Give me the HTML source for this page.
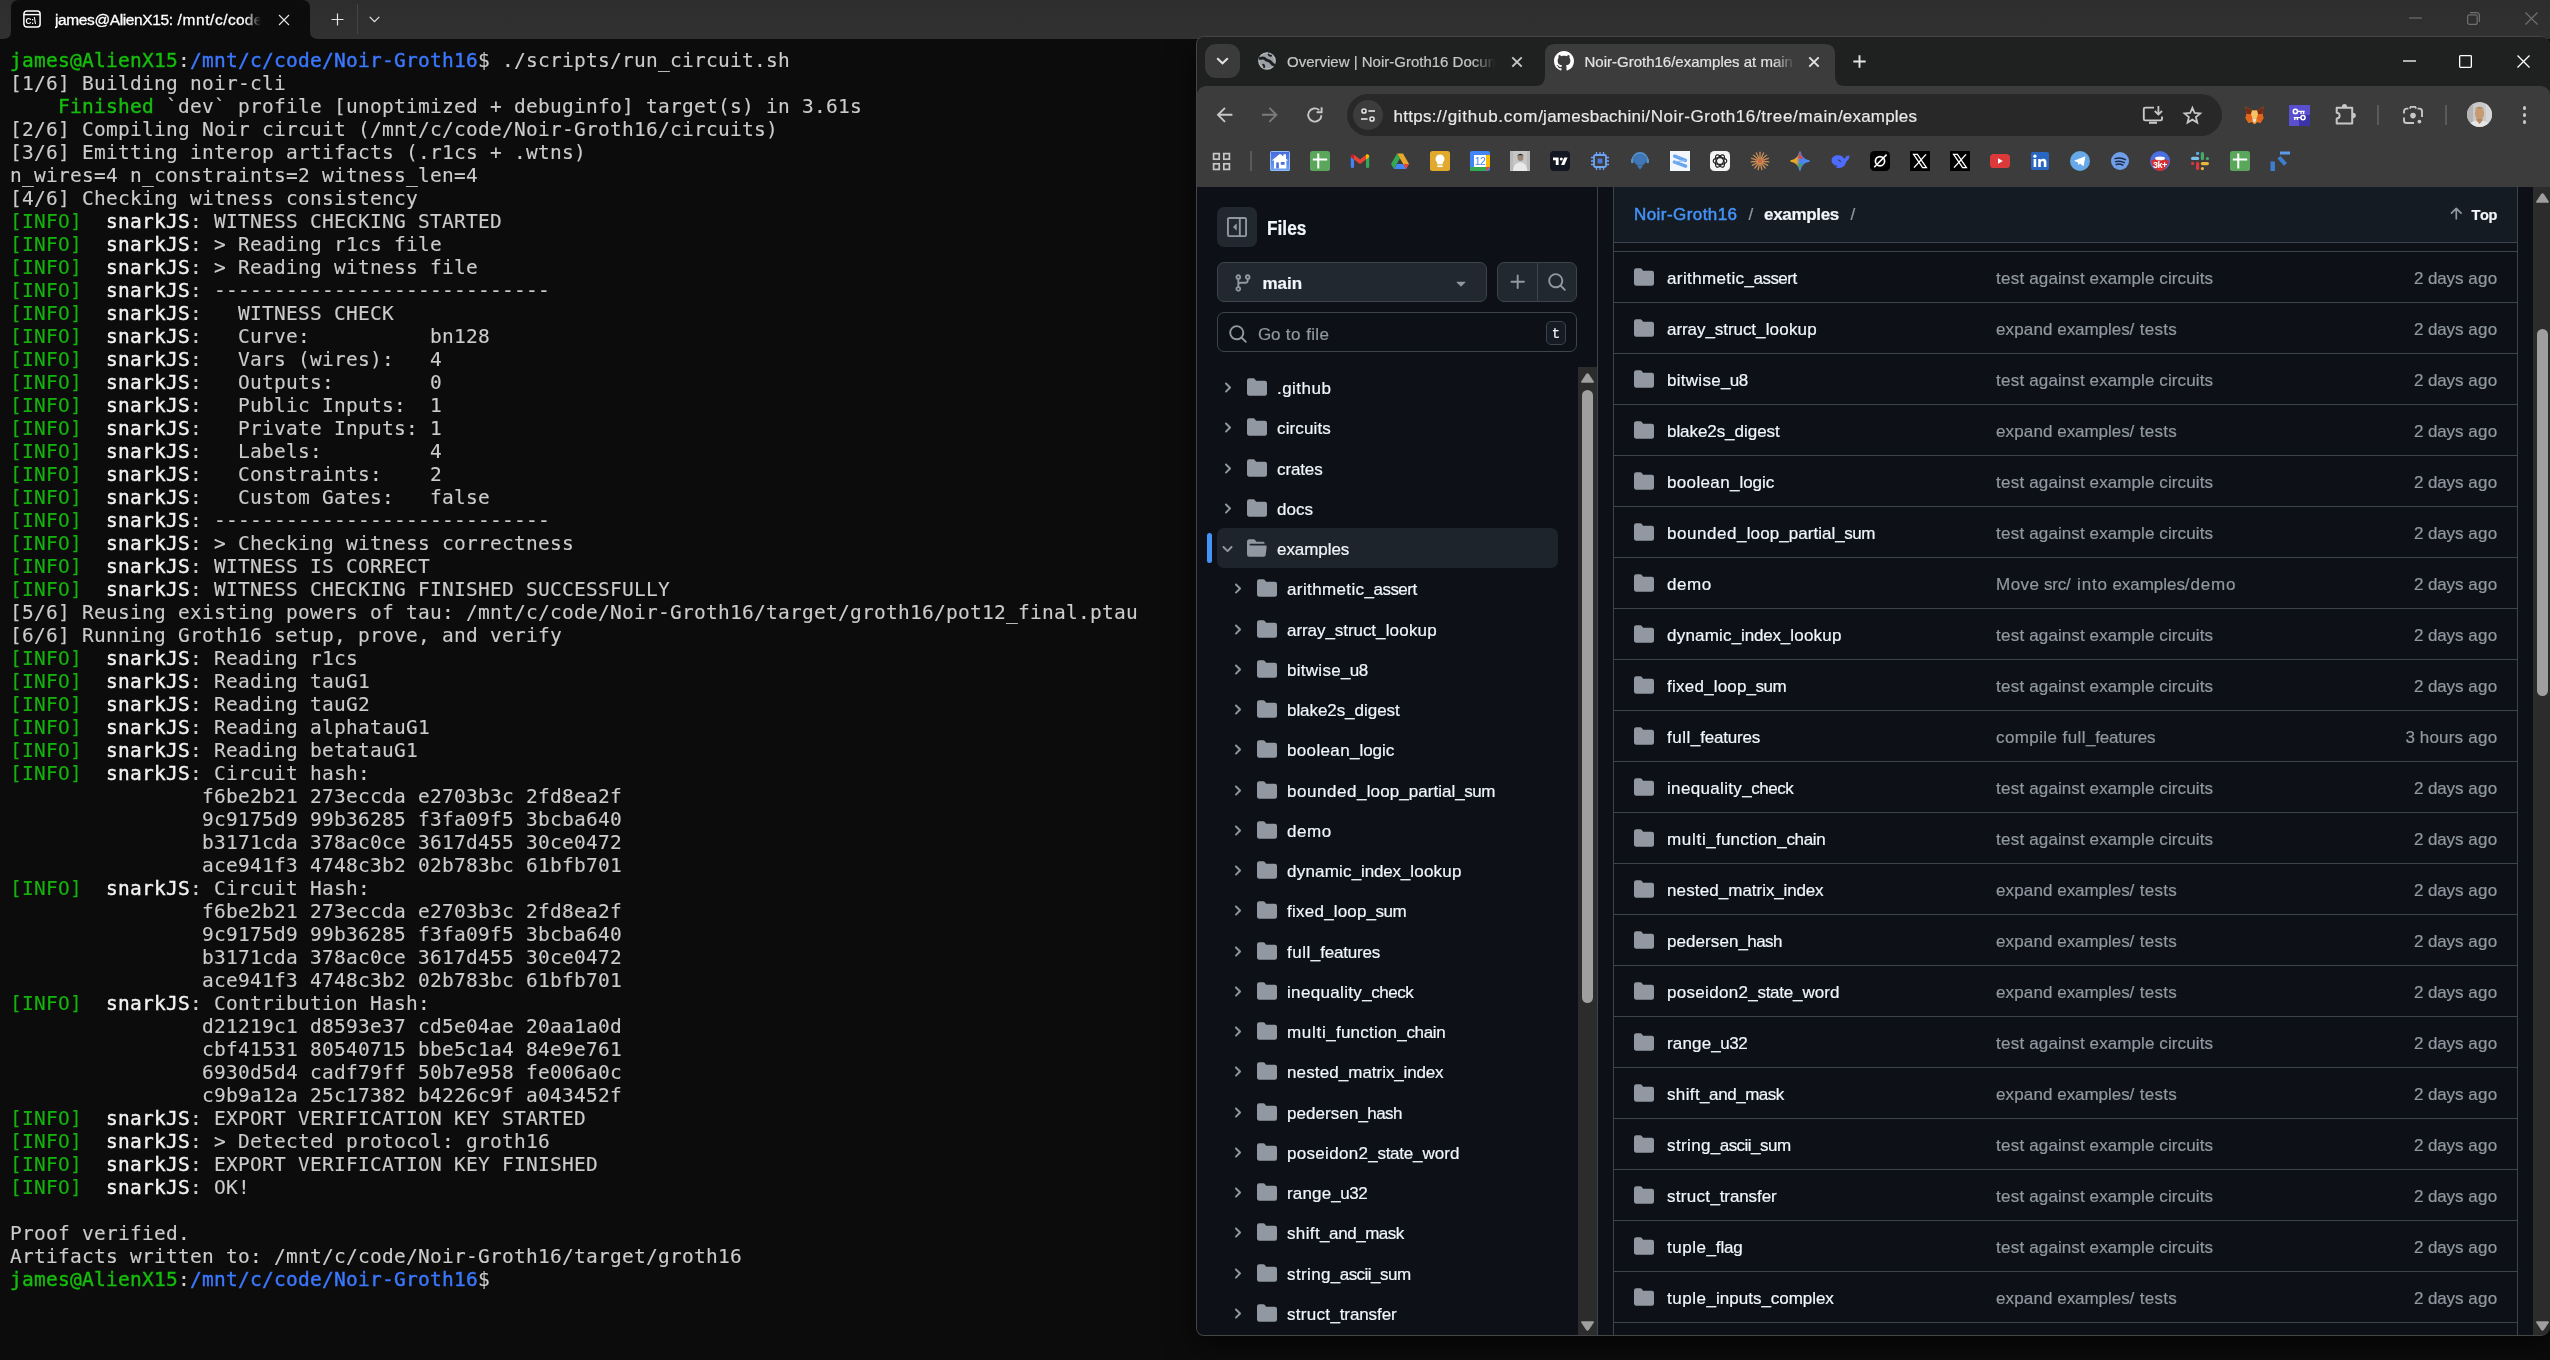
<!DOCTYPE html>
<html lang="en"><head><meta charset="utf-8"><title>Noir-Groth16/examples at main</title>
<style>
html,body{margin:0;padding:0;}
body{width:2550px;height:1360px;overflow:hidden;background:#0c0c0c;position:relative;
font-family:"Liberation Sans",sans-serif;font-kerning:none;font-variant-ligatures:none;}
svg{display:block;overflow:visible;}
#term,#in{will-change:transform;}
#gh div{-webkit-text-stroke:0.2px currentColor;}
#win{position:absolute;left:1196px;top:36px;width:1354px;height:1300px;box-sizing:border-box;border:1px solid #454545;border-right:none;
border-radius:8px 9px 9px 8px;overflow:hidden;background:#1f2020;}
#sh{position:absolute;left:1198px;top:40px;width:1352px;height:1294px;border-radius:8px;box-shadow:0 10px 30px 2px rgba(0,0,0,0.65);}
#in{position:absolute;left:-1197px;top:-37px;width:2550px;height:1360px;}
</style></head><body>
<div id="sh"></div>
<div id="term">
<div style="position:absolute;left:0px;top:0px;width:2550px;height:39px;background:linear-gradient(#2d2d2d,#313131);"></div>
<svg style="position:absolute;left:0px;top:0px;" width="330" height="39" viewBox="0 0 330 39"><path d="M3 39 Q11 39 11 31 V8 Q11 0 19 0 H302 Q310 0 310 8 V31 Q310 39 318 39 Z" fill="#0c0c0c"/></svg>
<svg style="position:absolute;left:23px;top:10px;" width="18" height="18" viewBox="0 0 18 18"><rect x="0.9" y="0.9" width="16.2" height="16.2" rx="3" fill="none" stroke="#fff" stroke-width="1.5"/><path d="M1 4.6H17" stroke="#fff" stroke-width="1.4"/><text x="2.6" y="14.2" font-family="Liberation Sans, sans-serif" font-size="8.2" font-weight="700" fill="#fff" letter-spacing="-0.3">C:\</text></svg>
<div style="position:absolute;white-space:nowrap;top:8px;height:24px;line-height:24px;font-size:15.5px;color:#fff;left:55px;width:206px;overflow:hidden;-webkit-text-stroke:0.3px #fff;-webkit-mask-image:linear-gradient(90deg,#000 190px,transparent 206px);mask-image:linear-gradient(90deg,#000 190px,transparent 206px);"><span style="letter-spacing:-0.39px">james@AlienX15:</span><span style="letter-spacing:0.61px"> /mnt</span><span style="letter-spacing:0.55px">/c</span><span style="letter-spacing:0.29px">/code</span><span style="letter-spacing:0.28px">/Noir-Groth16</span></div>
<svg style="position:absolute;left:278px;top:14px;" width="12" height="12" viewBox="0 0 12 12"><path d="M1 1L11 11M11 1L1 11" stroke="#e6e6e6" stroke-width="1.1" fill="none"/></svg>
<svg style="position:absolute;left:331px;top:13px;" width="13" height="13" viewBox="0 0 13 13"><path d="M6.5 0.5V12.5M0.5 6.5H12.5" stroke="#e6e6e6" stroke-width="1.2" fill="none"/></svg>
<div style="position:absolute;left:357px;top:4px;width:1px;height:30px;background:#454545;"></div>
<svg style="position:absolute;left:369px;top:16px;" width="11" height="7" viewBox="0 0 11 7"><path d="M0.7 0.8L5.5 5.6L10.3 0.8" stroke="#e6e6e6" stroke-width="1.2" fill="none"/></svg>
<svg style="position:absolute;left:2409px;top:17px;" width="13" height="2" viewBox="0 0 13 2"><path d="M0 1H13" stroke="#6f6f6f" stroke-width="1.2"/></svg>
<svg style="position:absolute;left:2467px;top:12px;" width="13" height="13" viewBox="0 0 13 13"><rect x="0.6" y="2.8" width="9.6" height="9.6" rx="2" fill="none" stroke="#6f6f6f" stroke-width="1.2"/><path d="M3 0.6H9.4A3 3 0 0 1 12.4 3.6V10" fill="none" stroke="#6f6f6f" stroke-width="1.2"/></svg>
<svg style="position:absolute;left:2525px;top:12px;" width="13" height="13" viewBox="0 0 13 13"><path d="M0.5 0.5L12.5 12.5M12.5 0.5L0.5 12.5" stroke="#6f6f6f" stroke-width="1.2" fill="none"/></svg>
<pre style="position:absolute;left:10px;top:49px;margin:0;font-family:'DejaVu Sans Mono','Liberation Mono',monospace;font-size:19.5px;line-height:23px;letter-spacing:0.2604px;color:#cccccc;font-kerning:none;font-variant-ligatures:none;-webkit-text-stroke:0.12px currentColor;"><span style="color:#15bd0c;-webkit-text-stroke:0.4px currentColor;">james@AlienX15</span>:<span style="color:#3b78ff;-webkit-text-stroke:0.4px currentColor;">/mnt/c/code/Noir-Groth16</span>$ ./scripts/run_circuit.sh
[1/6] Building noir-cli
    <span style="color:#15bd0c;-webkit-text-stroke:0.4px currentColor;">Finished</span> `dev` profile [unoptimized + debuginfo] target(s) in 3.61s
[2/6] Compiling Noir circuit (/mnt/c/code/Noir-Groth16/circuits)
[3/6] Emitting interop artifacts (.r1cs + .wtns)
n_wires=4 n_constraints=2 witness_len=4
[4/6] Checking witness consistency
<span style="color:#14b40d;">[INFO]</span>  <span style="color:#f2f2f2;-webkit-text-stroke:0.4px currentColor;">snarkJS</span>: WITNESS CHECKING STARTED
<span style="color:#14b40d;">[INFO]</span>  <span style="color:#f2f2f2;-webkit-text-stroke:0.4px currentColor;">snarkJS</span>: &gt; Reading r1cs file
<span style="color:#14b40d;">[INFO]</span>  <span style="color:#f2f2f2;-webkit-text-stroke:0.4px currentColor;">snarkJS</span>: &gt; Reading witness file
<span style="color:#14b40d;">[INFO]</span>  <span style="color:#f2f2f2;-webkit-text-stroke:0.4px currentColor;">snarkJS</span>: ----------------------------
<span style="color:#14b40d;">[INFO]</span>  <span style="color:#f2f2f2;-webkit-text-stroke:0.4px currentColor;">snarkJS</span>:   WITNESS CHECK
<span style="color:#14b40d;">[INFO]</span>  <span style="color:#f2f2f2;-webkit-text-stroke:0.4px currentColor;">snarkJS</span>:   Curve:          bn128
<span style="color:#14b40d;">[INFO]</span>  <span style="color:#f2f2f2;-webkit-text-stroke:0.4px currentColor;">snarkJS</span>:   Vars (wires):   4
<span style="color:#14b40d;">[INFO]</span>  <span style="color:#f2f2f2;-webkit-text-stroke:0.4px currentColor;">snarkJS</span>:   Outputs:        0
<span style="color:#14b40d;">[INFO]</span>  <span style="color:#f2f2f2;-webkit-text-stroke:0.4px currentColor;">snarkJS</span>:   Public Inputs:  1
<span style="color:#14b40d;">[INFO]</span>  <span style="color:#f2f2f2;-webkit-text-stroke:0.4px currentColor;">snarkJS</span>:   Private Inputs: 1
<span style="color:#14b40d;">[INFO]</span>  <span style="color:#f2f2f2;-webkit-text-stroke:0.4px currentColor;">snarkJS</span>:   Labels:         4
<span style="color:#14b40d;">[INFO]</span>  <span style="color:#f2f2f2;-webkit-text-stroke:0.4px currentColor;">snarkJS</span>:   Constraints:    2
<span style="color:#14b40d;">[INFO]</span>  <span style="color:#f2f2f2;-webkit-text-stroke:0.4px currentColor;">snarkJS</span>:   Custom Gates:   false
<span style="color:#14b40d;">[INFO]</span>  <span style="color:#f2f2f2;-webkit-text-stroke:0.4px currentColor;">snarkJS</span>: ----------------------------
<span style="color:#14b40d;">[INFO]</span>  <span style="color:#f2f2f2;-webkit-text-stroke:0.4px currentColor;">snarkJS</span>: &gt; Checking witness correctness
<span style="color:#14b40d;">[INFO]</span>  <span style="color:#f2f2f2;-webkit-text-stroke:0.4px currentColor;">snarkJS</span>: WITNESS IS CORRECT
<span style="color:#14b40d;">[INFO]</span>  <span style="color:#f2f2f2;-webkit-text-stroke:0.4px currentColor;">snarkJS</span>: WITNESS CHECKING FINISHED SUCCESSFULLY
[5/6] Reusing existing powers of tau: /mnt/c/code/Noir-Groth16/target/groth16/pot12_final.ptau
[6/6] Running Groth16 setup, prove, and verify
<span style="color:#14b40d;">[INFO]</span>  <span style="color:#f2f2f2;-webkit-text-stroke:0.4px currentColor;">snarkJS</span>: Reading r1cs
<span style="color:#14b40d;">[INFO]</span>  <span style="color:#f2f2f2;-webkit-text-stroke:0.4px currentColor;">snarkJS</span>: Reading tauG1
<span style="color:#14b40d;">[INFO]</span>  <span style="color:#f2f2f2;-webkit-text-stroke:0.4px currentColor;">snarkJS</span>: Reading tauG2
<span style="color:#14b40d;">[INFO]</span>  <span style="color:#f2f2f2;-webkit-text-stroke:0.4px currentColor;">snarkJS</span>: Reading alphatauG1
<span style="color:#14b40d;">[INFO]</span>  <span style="color:#f2f2f2;-webkit-text-stroke:0.4px currentColor;">snarkJS</span>: Reading betatauG1
<span style="color:#14b40d;">[INFO]</span>  <span style="color:#f2f2f2;-webkit-text-stroke:0.4px currentColor;">snarkJS</span>: Circuit hash:
                f6be2b21 273eccda e2703b3c 2fd8ea2f
                9c9175d9 99b36285 f3fa09f5 3bcba640
                b3171cda 378ac0ce 3617d455 30ce0472
                ace941f3 4748c3b2 02b783bc 61bfb701
<span style="color:#14b40d;">[INFO]</span>  <span style="color:#f2f2f2;-webkit-text-stroke:0.4px currentColor;">snarkJS</span>: Circuit Hash:
                f6be2b21 273eccda e2703b3c 2fd8ea2f
                9c9175d9 99b36285 f3fa09f5 3bcba640
                b3171cda 378ac0ce 3617d455 30ce0472
                ace941f3 4748c3b2 02b783bc 61bfb701
<span style="color:#14b40d;">[INFO]</span>  <span style="color:#f2f2f2;-webkit-text-stroke:0.4px currentColor;">snarkJS</span>: Contribution Hash:
                d21219c1 d8593e37 cd5e04ae 20aa1a0d
                cbf41531 80540715 bbe5c1a4 84e9e761
                6930d5d4 cadf79ff 50b7e958 fe006a0c
                c9b9a12a 25c17382 b4226c9f a043452f
<span style="color:#14b40d;">[INFO]</span>  <span style="color:#f2f2f2;-webkit-text-stroke:0.4px currentColor;">snarkJS</span>: EXPORT VERIFICATION KEY STARTED
<span style="color:#14b40d;">[INFO]</span>  <span style="color:#f2f2f2;-webkit-text-stroke:0.4px currentColor;">snarkJS</span>: &gt; Detected protocol: groth16
<span style="color:#14b40d;">[INFO]</span>  <span style="color:#f2f2f2;-webkit-text-stroke:0.4px currentColor;">snarkJS</span>: EXPORT VERIFICATION KEY FINISHED
<span style="color:#14b40d;">[INFO]</span>  <span style="color:#f2f2f2;-webkit-text-stroke:0.4px currentColor;">snarkJS</span>: OK!

Proof verified.
Artifacts written to: /mnt/c/code/Noir-Groth16/target/groth16
<span style="color:#15bd0c;-webkit-text-stroke:0.4px currentColor;">james@AlienX15</span>:<span style="color:#3b78ff;-webkit-text-stroke:0.4px currentColor;">/mnt/c/code/Noir-Groth16</span>$</pre>
</div>
<div id="win"><div id="in">
<div style="position:absolute;left:1197px;top:37px;width:1353px;height:49px;background:#1f2020;"></div>
<div style="position:absolute;left:1197px;top:86px;width:1353px;height:101px;background:#3c3c3c;border-radius:9px 9px 0 0;"></div>
<div style="position:absolute;left:1205px;top:44px;width:35px;height:34px;background:#3b3b3b;border-radius:11px;"></div>
<svg style="position:absolute;left:1216px;top:57px;" width="13" height="8" viewBox="0 0 13 8"><path d="M1.2 1.2L6.5 6.3L11.8 1.2" stroke="#e3e3e3" stroke-width="2" fill="none"/></svg>
<svg style="position:absolute;left:1258px;top:52px;" width="18" height="18" viewBox="0 0 18 18"><circle cx="9" cy="9" r="8.2" fill="#9aa0a6" stroke="#b8bcc0" stroke-width="1.3"/><path d="M2.2 6.4C4.4 5.6 6.6 6 7.6 7.4C8.6 8.8 10.2 8.4 11.6 9.2C13.4 10.2 13.6 12.4 15.6 12.8" fill="none" stroke="#1f2020" stroke-width="3" stroke-linecap="round"/><path d="M10.6 2.4C11 3.6 12.4 4 13.4 3.6" fill="none" stroke="#1f2020" stroke-width="1.8" stroke-linecap="round"/><path d="M5 12.6C6 13 6.4 14.2 6 15.4" fill="none" stroke="#1f2020" stroke-width="1.8" stroke-linecap="round"/></svg>
<div style="position:absolute;left:1287px;top:50px;height:24px;line-height:24px;width:208px;overflow:hidden;white-space:nowrap;font-size:15px;letter-spacing:0px;color:#c7c7c7;-webkit-text-stroke:0.2px #c7c7c7;-webkit-mask-image:linear-gradient(90deg,#000 185px,transparent 208px);mask-image:linear-gradient(90deg,#000 185px,transparent 208px);">Overview | Noir-Groth16 Documentation</div>
<svg style="position:absolute;left:1511px;top:56px;" width="12" height="12" viewBox="0 0 12 12"><path d="M1.3 1.3L10.7 10.7M10.7 1.3L1.3 10.7" stroke="#c7c7c7" stroke-width="1.9" fill="none"/></svg>
<svg style="position:absolute;left:1535px;top:44px;" width="310" height="42" viewBox="0 0 310 42"><path d="M0 42Q10 42 10 32V10Q10 0 20 0H290Q300 0 300 10V32Q300 42 310 42Z" fill="#3c3c3c"/></svg>
<svg style="position:absolute;left:1554px;top:51px;" width="20" height="20" viewBox="0 0 16 16"><path fill="#fff" d="M8 0c4.42 0 8 3.58 8 8a8.013 8.013 0 0 1-5.45 7.59c-.4.08-.55-.17-.55-.38 0-.27.01-1.13.01-2.2 0-.75-.25-1.23-.54-1.48 1.78-.2 3.65-.88 3.65-3.95 0-.88-.31-1.59-.82-2.15.08-.2.36-1.02-.08-2.12 0 0-.67-.22-2.2.82-.64-.18-1.32-.27-2-.27-.68 0-1.36.09-2 .27-1.53-1.03-2.2-.82-2.2-.82-.44 1.1-.16 1.92-.08 2.12-.51.56-.82 1.28-.82 2.15 0 3.06 1.86 3.75 3.64 3.95-.23.2-.44.55-.51 1.07-.46.21-1.61.55-2.33-.66-.15-.24-.6-.83-1.23-.82-.67.01-.27.38.01.53.34.19.73.9.82 1.13.16.45.68 1.31 2.69.94 0 .67.01 1.3.01 1.49 0 .21-.15.45-.55.38A7.995 7.995 0 0 1 0 8c0-4.42 3.58-8 8-8Z"/></svg>
<div style="position:absolute;left:1584.5px;top:50px;height:24px;line-height:24px;width:210px;overflow:hidden;white-space:nowrap;font-size:15px;letter-spacing:0px;color:#e3e3e3;-webkit-text-stroke:0.2px #e3e3e3;-webkit-mask-image:linear-gradient(90deg,#000 188px,transparent 210px);mask-image:linear-gradient(90deg,#000 188px,transparent 210px);">Noir-Groth16/examples at main · jamesbachini</div>
<svg style="position:absolute;left:1808px;top:56px;" width="12" height="12" viewBox="0 0 12 12"><path d="M1.3 1.3L10.7 10.7M10.7 1.3L1.3 10.7" stroke="#e3e3e3" stroke-width="1.9" fill="none"/></svg>
<svg style="position:absolute;left:1853px;top:55px;" width="13" height="13" viewBox="0 0 13 13"><path d="M6.5 0.3V12.7M0.3 6.5H12.7" stroke="#e3e3e3" stroke-width="1.9" fill="none"/></svg>
<svg style="position:absolute;left:2403px;top:60px;" width="13" height="2" viewBox="0 0 13 2"><path d="M0 1H13" stroke="#fff" stroke-width="1.3"/></svg>
<svg style="position:absolute;left:2459px;top:55px;" width="13" height="13" viewBox="0 0 13 13"><rect x="0.65" y="0.65" width="11.7" height="11.7" rx="0.8" fill="none" stroke="#fff" stroke-width="1.3"/></svg>
<svg style="position:absolute;left:2517px;top:55px;" width="13" height="13" viewBox="0 0 13 13"><path d="M0.5 0.5L12.5 12.5M12.5 0.5L0.5 12.5" stroke="#fff" stroke-width="1.3" fill="none"/></svg>
<svg style="position:absolute;left:1216.6px;top:106.7px;" width="17" height="16" viewBox="0 0 17 16"><path d="M8 0.8L1 7.8L8 14.8M1.4 7.8H15.4" stroke="#c7c7c7" stroke-width="1.9" fill="none"/></svg>
<svg style="position:absolute;left:1261.3px;top:106.7px;" width="17" height="16" viewBox="0 0 17 16"><path d="M8.4 0.8L15.4 7.8L8.4 14.8M15 7.8H1" stroke="#7b7b7b" stroke-width="1.9" fill="none"/></svg>
<svg style="position:absolute;left:1305.6px;top:105.6px;" width="18" height="18" viewBox="0 0 18 18"><path d="M15.4 9.2A6.6 6.6 0 1 1 13.2 4.1" stroke="#c7c7c7" stroke-width="1.9" fill="none"/><path d="M15.6 1.2V6.2H10.6" stroke="#c7c7c7" stroke-width="1.9" fill="none"/></svg>
<div style="position:absolute;left:1347px;top:94px;width:875px;height:42px;background:#282828;border-radius:21px;"></div>
<div style="position:absolute;left:1353px;top:100px;width:30px;height:30px;background:#3c3c3c;border-radius:15px;"></div>
<svg style="position:absolute;left:1359px;top:106px;" width="18" height="18" viewBox="0 0 18 18"><circle cx="5" cy="5" r="2.1" fill="none" stroke="#e3e3e3" stroke-width="1.5"/><path d="M9.4 5H16" stroke="#e3e3e3" stroke-width="1.6"/><circle cx="13" cy="13" r="2.1" fill="none" stroke="#e3e3e3" stroke-width="1.5"/><path d="M2 13H8.6" stroke="#e3e3e3" stroke-width="1.6"/></svg>
<div style="position:absolute;white-space:nowrap;top:102px;height:30px;line-height:30px;font-size:17px;color:#e8e8e8;left:1393.5px;-webkit-text-stroke:0.2px #e8e8e8;"><span style="letter-spacing:0.28px">https:</span><span style="letter-spacing:0.73px">//github.com</span><span style="letter-spacing:0.25px">/jamesbachini</span><span style="letter-spacing:0.58px">/Noir-Groth16</span><span style="letter-spacing:0.63px">/tree</span><span style="letter-spacing:0.67px">/main</span><span style="letter-spacing:0.18px">/examples</span></div>
<svg style="position:absolute;left:2142px;top:105px;" width="22" height="20" viewBox="0 0 22 20"><path d="M12 2.6H3.2A1.4 1.4 0 0 0 1.8 4V14A1.4 1.4 0 0 0 3.2 15.4H18.6A1.4 1.4 0 0 0 20 14V11.6" fill="none" stroke="#c7c7c7" stroke-width="1.9"/><rect x="7" y="16.6" width="8" height="2.2" fill="#c7c7c7"/><path d="M16.4 1V9.2M12.8 6L16.4 9.6L20 6" fill="none" stroke="#c7c7c7" stroke-width="1.8"/></svg>
<svg style="position:absolute;left:2182px;top:104px;" width="21" height="21" viewBox="0 0 21 21"><path transform="translate(10.4 18.6) scale(0.9) translate(-10.5 -18.7)" d="M10.5 2.2L12.9 8L19.2 8.5L14.4 12.6L15.9 18.7L10.5 15.4L5.1 18.7L6.6 12.6L1.8 8.5L8.1 8Z" fill="none" stroke="#c7c7c7" stroke-width="2" stroke-linejoin="miter"/></svg>
<svg style="position:absolute;left:2244px;top:105px;" width="21" height="21" viewBox="0 0 21 21"><path d="M1.5 1.5L8 5.5H13L19.5 1.5L18.5 9L19.5 13L16.5 18L13 17L11.5 19H9.5L8 17L4.5 18L1.5 13L2.5 9Z" fill="#e8821e"/><path d="M1.5 1.5L8 5.5L7 9.5L2.5 9ZM19.5 1.5L13 5.5L14 9.5L18.5 9Z" fill="#7a2b10"/><path d="M7 9.5L8 5.5H13L14 9.5L12.5 14H8.5Z" fill="#f5c36a"/><path d="M8.5 14H12.5L11.5 17.6H9.5Z" fill="#e4e0d8"/><path d="M2.5 9L7 9.5L8.5 14L4.5 18L1.5 13ZM18.5 9L14 9.5L12.5 14L16.5 18L19.5 13Z" fill="#e2651b"/></svg>
<svg style="position:absolute;left:2289px;top:105px;" width="21" height="21" viewBox="0 0 21 21"><rect width="21" height="21" fill="#5a4fcf"/><rect x="10" y="10" width="11" height="11" fill="#3d33a8"/><circle cx="6.4" cy="6.4" r="2.1" fill="none" stroke="#fff" stroke-width="1.5"/><path d="M8.4 6.4H15.6M12 6.4V9M14.6 6.4V9" stroke="#fff" stroke-width="1.4" fill="none"/><circle cx="14" cy="12.6" r="2.1" fill="none" stroke="#fff" stroke-width="1.5"/><path d="M12 12.6H4.8M8.4 12.6V15M5.8 12.6V15" stroke="#fff" stroke-width="1.4" fill="none"/></svg>
<svg style="position:absolute;left:2335px;top:103px;" width="22" height="22" viewBox="0 0 22 22"><path d="M1.7 4.8H17.2V20.4H1.7V15.5A2.9 2.9 0 0 0 1.7 9.7Z" fill="none" stroke="#c7c7c7" stroke-width="2" stroke-linejoin="round"/><path d="M6.9 4A2.6 2.9 0 0 1 12.1 4Z" fill="#c7c7c7"/><path d="M18 9.7A2.8 2.8 0 0 1 18 15.3Z" fill="#c7c7c7"/></svg>
<div style="position:absolute;left:2377px;top:105px;width:2px;height:20px;background:#5a5a5a;"></div>
<svg style="position:absolute;left:2402px;top:105px;" width="22" height="21" viewBox="0 0 22 21"><path d="M6.4 3.6H4.6A2.6 2.6 0 0 0 2 6.2V8.4M2 12.6V15.4A2.6 2.6 0 0 0 4.6 18H12M15.6 3.6H17.4A2.6 2.6 0 0 1 20 6.2V12" fill="none" stroke="#c7c7c7" stroke-width="1.9"/><path d="M7.8 3.6L8.8 1.8H13.2L14.2 3.6" fill="none" stroke="#c7c7c7" stroke-width="1.8"/><circle cx="11" cy="10.6" r="2.8" fill="#c7c7c7"/><circle cx="17.4" cy="16.6" r="1.9" fill="#c7c7c7"/></svg>
<div style="position:absolute;left:2445px;top:105px;width:2px;height:20px;background:#5a5a5a;"></div>
<svg style="position:absolute;left:2467px;top:102px;" width="25" height="25" viewBox="0 0 25 25"><defs><clipPath id="avc"><circle cx="12.5" cy="12.5" r="12.5"/></clipPath></defs><g clip-path="url(#avc)"><rect width="25" height="25" fill="#c9c9c9"/><rect x="0" y="0" width="6" height="25" fill="#b4b4b4"/><rect x="19" y="0" width="6" height="25" fill="#d6d6d6"/><ellipse cx="12.5" cy="11.5" rx="4.6" ry="6" fill="#c79a72"/><path d="M8 8C8 3.6 17 3.6 17 8L16 6.6H9Z" fill="#b08a60"/><path d="M9.5 16.5H15.5L16.5 25H8.5Z" fill="#b98a62"/><path d="M2 25C3 20 7 18.6 9.4 18.4L12.5 22L15.6 18.4C18 18.6 22 20 23 25Z" fill="#e6e6e6"/></g></svg>
<div style="position:absolute;left:2522.5px;top:106.2px;width:3.6px;height:3.6px;background:#c7c7c7;border-radius:50%;"></div>
<div style="position:absolute;left:2522.5px;top:113.2px;width:3.6px;height:3.6px;background:#c7c7c7;border-radius:50%;"></div>
<div style="position:absolute;left:2522.5px;top:120.2px;width:3.6px;height:3.6px;background:#c7c7c7;border-radius:50%;"></div>
<svg style="position:absolute;left:1212px;top:152px;" width="19" height="19" viewBox="0 0 19 19"><g fill="none" stroke="#c7c7c7" stroke-width="1.7"><rect x="1.6" y="1.6" width="5.6" height="5.6"/><rect x="11.8" y="1.6" width="5.6" height="5.6"/><rect x="1.6" y="11.8" width="5.6" height="5.6"/><rect x="11.8" y="11.8" width="5.6" height="5.6"/></g></svg>
<div style="position:absolute;left:1250px;top:151px;width:2px;height:20px;background:#5a5a5a;"></div>
<svg style="position:absolute;left:1270px;top:151px;" width="20" height="20" viewBox="0 0 20 20"><defs><linearGradient id="hg" x1="0" y1="0" x2="0" y2="1"><stop offset="0" stop-color="#4468dc"/><stop offset="1" stop-color="#6fa2f0"/></linearGradient></defs><rect width="20" height="20" rx="1.5" fill="url(#hg)"/><rect x="0.5" y="0.5" width="19" height="19" rx="1" fill="none" stroke="#8fbdf7" stroke-width="1"/><path d="M10 2.8L1.8 9.6H4V17.4H16.4V9.6H18.2L16 7.8V3.2H13.4V5.6Z" fill="#fff"/><rect x="6.2" y="11.4" width="2.6" height="6" fill="#4a6fe0"/><rect x="10.8" y="11" width="3.8" height="2.8" fill="#4a6fe0"/></svg>
<svg style="position:absolute;left:1310px;top:151px;" width="20" height="20" viewBox="0 0 20 20"><rect width="20" height="20" rx="2.5" fill="#5aa65a"/><path d="M8.3 2.4V17.4M2.8 8.4H17.2" stroke="#fff" stroke-width="2"/></svg>
<svg style="position:absolute;left:1350px;top:151px;" width="20" height="20" viewBox="0 0 20 20"><path d="M0.8 5V16.8H4V8.4Z" fill="#4285f4"/><path d="M0.8 5.2A1.9 1.9 0 0 1 3.8 3.6L4 3.8V8.4L0.8 6Z" fill="#c5221f"/><path d="M4 3.8L10 8.4L16 3.8V8.4L10 13L4 8.4Z" fill="#ea4335"/><path d="M19.2 5V16.8H16V8.4Z" fill="#34a853"/><path d="M19.2 5.2A1.9 1.9 0 0 0 16.2 3.6L16 3.8V8.4L19.2 6Z" fill="#fbbc04"/></svg>
<svg style="position:absolute;left:1390px;top:151px;" width="20" height="20" viewBox="0 0 20 20"><path d="M7 2.5H13L19 13H13Z" fill="#e8a92a"/><path d="M7 2.5L1 13L4 18L10 7.6Z" fill="#34a853"/><path d="M4 18H16L19 13H7Z" fill="#4285f4"/><path d="M13 13H19L16 18Z" fill="#ea4335"/><path d="M7 13L10 7.8L13 13Z" fill="#3c3c3c"/></svg>
<svg style="position:absolute;left:1430px;top:151px;" width="20" height="20" viewBox="0 0 20 20"><rect width="20" height="20" rx="2.5" fill="#e2aa2d"/><path d="M10 3.6A4.4 4.4 0 0 0 7.2 11.4V13.2H12.8V11.4A4.4 4.4 0 0 0 10 3.6Z" fill="#fff"/><rect x="7.4" y="14.3" width="5.2" height="1.8" fill="#fff"/></svg>
<svg style="position:absolute;left:1470px;top:151px;" width="20" height="20" viewBox="0 0 20 20"><rect width="20" height="20" rx="2" fill="#4285f4"/><rect x="16" y="4" width="4" height="12" fill="#fbbc04"/><rect x="0" y="16" width="16" height="4" fill="#34a853"/><path d="M16 16H20L16 20Z" fill="#ea4335"/><rect x="4" y="4" width="12" height="12" fill="#fff"/><text x="10" y="14" text-anchor="middle" font-family="Liberation Sans, sans-serif" font-size="10.5" fill="#4285f4" letter-spacing="-0.6">12</text></svg>
<svg style="position:absolute;left:1510px;top:151px;" width="20" height="20" viewBox="0 0 20 20"><rect width="20" height="20" fill="#b9b9b9"/><rect x="3" y="0" width="14" height="20" fill="#c6c6c6"/><ellipse cx="10.4" cy="6.4" rx="2.9" ry="3.5" fill="#9a8672"/><path d="M7.4 5.6C7.4 1.8 13.4 1.8 13.4 5.6L12.6 4.2H8.2Z" fill="#2d2d2d"/><path d="M3 20C3.4 13.6 7 11.6 10.4 11.6C13.8 11.6 17 13.6 17.4 20Z" fill="#e9e9e9"/></svg>
<svg style="position:absolute;left:1550px;top:151px;" width="20" height="20" viewBox="0 0 20 20"><rect width="20" height="20" rx="4" fill="#131722"/><path d="M3 6.5H8.6V14H5.8V9.3H3Z" fill="#fff"/><circle cx="11.3" cy="8" r="1.5" fill="#fff"/><path d="M14.2 6.5H17.6L14.4 14H11.1Z" fill="#fff"/></svg>
<svg style="position:absolute;left:1590px;top:151px;" width="20" height="20" viewBox="0 0 20 20"><rect x="4" y="4" width="12" height="12" rx="1.5" fill="none" stroke="#6ea5f5" stroke-width="1.8"/><rect x="7.6" y="7.6" width="4.8" height="4.8" fill="#4a7be0"/><path d="M6.5 1V4M10 1V4M13.5 1V4M6.5 16V19M10 16V19M13.5 16V19M1 6.5H4M1 10H4M1 13.5H4M16 6.5H19M16 10H19M16 13.5H19" stroke="#6ea5f5" stroke-width="1.3"/></svg>
<svg style="position:absolute;left:1630px;top:151px;" width="20" height="20" viewBox="0 0 20 20"><circle cx="10" cy="8.6" r="6.3" fill="#3f76b5"/><path d="M2.4 9.5A7.6 7.6 0 0 1 17.6 9.5" fill="none" stroke="#5590cf" stroke-width="1.6"/><rect x="1" y="7.6" width="2.6" height="4.6" rx="1.2" fill="#5590cf"/><rect x="16.4" y="7.6" width="2.6" height="4.6" rx="1.2" fill="#5590cf"/><path d="M7 15L10 18.6L13 15Z" fill="#3f76b5"/></svg>
<svg style="position:absolute;left:1670px;top:151px;" width="20" height="20" viewBox="0 0 20 20"><rect width="20" height="20" fill="#f3f6fb"/><g stroke="#6aa5ee" stroke-width="3.4" stroke-linecap="round"><path d="M4.6 5.2L15.4 9.4"/><path d="M4.4 11L15.6 15.2"/></g><path d="M15.4 9.4L4.4 11" stroke="#8fbcf3" stroke-width="1.2"/></svg>
<svg style="position:absolute;left:1710px;top:151px;" width="20" height="20" viewBox="0 0 20 20"><rect width="20" height="20" rx="4.5" fill="#f4f4f4"/><g fill="none" stroke="#1a1a1a" stroke-width="1.15"><ellipse cx="10" cy="10" rx="6.8" ry="3.4" /><ellipse cx="10" cy="10" rx="6.8" ry="3.4" transform="rotate(60 10 10)"/><ellipse cx="10" cy="10" rx="6.8" ry="3.4" transform="rotate(120 10 10)"/></g></svg>
<svg style="position:absolute;left:1750px;top:151px;" width="20" height="20" viewBox="0 0 20 20"><g stroke="#cf8f58" stroke-width="1.3" stroke-linecap="round"><path d="M10 10L10 1.2" transform="rotate(0 10 10)"/><path d="M10 10L10 1.2" transform="rotate(24 10 10)"/><path d="M10 10L10 1.2" transform="rotate(48 10 10)"/><path d="M10 10L10 1.2" transform="rotate(72 10 10)"/><path d="M10 10L10 1.2" transform="rotate(96 10 10)"/><path d="M10 10L10 1.2" transform="rotate(120 10 10)"/><path d="M10 10L10 1.2" transform="rotate(144 10 10)"/><path d="M10 10L10 1.2" transform="rotate(168 10 10)"/><path d="M10 10L10 1.2" transform="rotate(192 10 10)"/><path d="M10 10L10 1.2" transform="rotate(216 10 10)"/><path d="M10 10L10 1.2" transform="rotate(240 10 10)"/><path d="M10 10L10 1.2" transform="rotate(264 10 10)"/><path d="M10 10L10 1.2" transform="rotate(288 10 10)"/><path d="M10 10L10 1.2" transform="rotate(312 10 10)"/><path d="M10 10L10 1.2" transform="rotate(336 10 10)"/></g><circle cx="10" cy="10" r="2.2" fill="#d9663c"/></svg>
<svg style="position:absolute;left:1790px;top:151px;" width="20" height="20" viewBox="0 0 20 20"><defs><linearGradient id="gm" x1="0" y1="0.5" x2="1" y2="0.5"><stop offset="0" stop-color="#f4b400"/><stop offset="0.3" stop-color="#e8a33a"/><stop offset="0.5" stop-color="#4a7fe8"/><stop offset="1" stop-color="#4c8df6"/></linearGradient></defs><path d="M10 1C10.8 6 14 9.2 19 10C14 10.8 10.8 14 10 19C9.2 14 6 10.8 1 10C6 9.2 9.2 6 10 1Z" fill="url(#gm)" stroke="url(#gm)" stroke-width="1.6" stroke-linejoin="round"/><path d="M10 1C10.5 4.4 11.8 6.6 13.6 8.2L8 7C9 5.4 9.6 3.4 10 1Z" fill="#ea4335"/><path d="M10 19C9.6 16.2 8.8 14.2 7.4 12.6L12.4 12.8C11.2 14.4 10.4 16.4 10 19Z" fill="#34a853"/></svg>
<svg style="position:absolute;left:1830px;top:151px;" width="20" height="20" viewBox="0 0 20 20"><path d="M1.6 9.4C1.6 6 4.6 4 8.4 4.2C11.2 4.4 13.2 5.8 14.2 7.6C15.4 7.4 16.2 6.4 16.4 4.6C17.2 5.4 18 5.2 19.4 4C19.6 7.4 18.2 9.6 16.2 10.6C15.8 14.2 13 17 9.2 17C7.6 17 6.2 16.6 5.2 15.8C6.4 15.8 7.4 15.4 8 14.8C4.4 14.6 1.6 12.6 1.6 9.4Z" fill="#4d6bfe"/><path d="M7.4 8.6C9.4 8.4 11 9.6 11.4 11.6C10 11 8.6 10 7.4 8.6Z" fill="#3c3c3c"/></svg>
<svg style="position:absolute;left:1870px;top:151px;" width="20" height="20" viewBox="0 0 20 20"><rect width="20" height="20" rx="4.5" fill="#000"/><circle cx="10" cy="10.2" r="4.6" fill="none" stroke="#fff" stroke-width="1.7"/><path d="M4.2 16.2L16.6 3.6" stroke="#fff" stroke-width="1.5"/></svg>
<svg style="position:absolute;left:1910px;top:151px;" width="20" height="20" viewBox="0 0 20 20"><rect width="20" height="20" fill="#000"/><path d="M3.6 3.4H7.4L16.4 16.6H12.6Z" fill="none" stroke="#fff" stroke-width="1.3"/><path d="M16 3.4L4 16.6" stroke="#fff" stroke-width="1.4"/></svg>
<svg style="position:absolute;left:1950px;top:151px;" width="20" height="20" viewBox="0 0 20 20"><rect width="20" height="20" fill="#000"/><path d="M3.6 3.4H7.4L16.4 16.6H12.6Z" fill="none" stroke="#fff" stroke-width="1.3"/><path d="M16 3.4L4 16.6" stroke="#fff" stroke-width="1.4"/></svg>
<svg style="position:absolute;left:1990px;top:151px;" width="20" height="20" viewBox="0 0 20 20"><rect x="0" y="3" width="20" height="14" rx="3.6" fill="#dc3a3a"/><path d="M8 7.2L12.8 10L8 12.8Z" fill="#fff"/></svg>
<svg style="position:absolute;left:2030px;top:151px;" width="20" height="20" viewBox="0 0 20 20"><rect x="1" y="1" width="18" height="18" rx="2" fill="#2867c2"/><rect x="3.6" y="8" width="2.6" height="8" fill="#fff"/><circle cx="4.9" cy="5.2" r="1.6" fill="#fff"/><path d="M8.2 8H10.7V9.2C11.3 8.3 12.2 7.8 13.4 7.8C15.6 7.8 16.4 9.2 16.4 11.4V16H13.8V11.9C13.8 10.8 13.4 10.1 12.4 10.1C11.4 10.1 10.8 10.8 10.8 11.9V16H8.2Z" fill="#fff"/></svg>
<svg style="position:absolute;left:2070px;top:151px;" width="20" height="20" viewBox="0 0 20 20"><circle cx="10" cy="10" r="10" fill="#66a8e8"/><path d="M4 9.8L15.4 5.2L13.6 15.2L9.8 12.4L8.4 14.2L8 11.4Z" fill="#fff"/></svg>
<svg style="position:absolute;left:2110px;top:151px;" width="20" height="20" viewBox="0 0 20 20"><circle cx="10" cy="10" r="9" fill="#6f9fe8"/><path d="M5 7.6C8.6 6.5 12.4 6.9 15.4 8.6M5.6 10.6C8.6 9.8 11.6 10.1 14.2 11.6M6.2 13.4C8.6 12.8 10.8 13 12.8 14.2" fill="none" stroke="#1c2a44" stroke-width="1.5" stroke-linecap="round"/></svg>
<svg style="position:absolute;left:2150px;top:151px;" width="20" height="20" viewBox="0 0 20 20"><circle cx="10" cy="10" r="10" fill="#4b6fe0"/><path d="M0.6 10A9.6 9.6 0 0 0 19.4 10Q10 5 0.6 10Z" fill="#d42f2f"/><path d="M0 10.5A10 10 0 0 0 20 10.5A10 10 0 0 1 0 10.5Z" fill="#d42f2f"/><circle cx="10" cy="13" r="7" fill="#d42f2f"/><ellipse cx="10" cy="7.4" rx="5" ry="1.8" fill="#fff"/><text x="10" y="17" text-anchor="middle" font-family="Liberation Sans, sans-serif" font-size="9" font-weight="700" fill="#fff" letter-spacing="-0.5">3k+</text></svg>
<svg style="position:absolute;left:2190px;top:151px;" width="20" height="20" viewBox="0 0 20 20"><g stroke-linecap="round" stroke-width="3.2" fill="none"><path d="M7.6 2.4V2.5" stroke="#5ab0e8"/><path d="M2.6 7.4H7.6" stroke="#7cc0ee"/><path d="M12.4 2.6V7.6" stroke="#4aa86a"/><path d="M17.4 7.5V7.6" stroke="#4aa86a"/><path d="M12.4 12.6H17.4" stroke="#e8b73a"/><path d="M12.4 17.5V17.6" stroke="#e8b73a"/><path d="M7.6 12.4V17.4" stroke="#d9363e"/><path d="M2.6 12.4V12.5" stroke="#d9363e"/></g></svg>
<svg style="position:absolute;left:2230px;top:151px;" width="20" height="20" viewBox="0 0 20 20"><rect width="20" height="20" rx="2.5" fill="#5aa65a"/><path d="M8.3 2.4V17.4M2.8 8.4H17.2" stroke="#fff" stroke-width="2"/></svg>
<svg style="position:absolute;left:2270px;top:151px;" width="20" height="20" viewBox="0 0 20 20"><rect x="10" y="0.5" width="10" height="3" fill="#5b9bea"/><rect x="0.5" y="10.5" width="4.4" height="9.5" fill="#3d7fcf"/><path d="M7.4 7.6L10.4 5L17 12L14 14.8Z" fill="#3d7fcf"/></svg>
<div id="gh"><div style="position:absolute;left:1197px;top:187px;width:1353px;height:1148px;background:#0d1117;"></div>
<div style="position:absolute;left:1597px;top:187px;width:1px;height:1148px;background:#3d444d;"></div>
<div style="position:absolute;left:1217px;top:207px;width:40px;height:40px;background:#212830;border-radius:7px;"></div>
<svg style="position:absolute;left:1227px;top:217px;" width="20" height="20" viewBox="0 0 16 16"><path fill="#9198a1" d="M9.177 7.823a.25.25 0 0 0 0 .354l2.396 2.396A.25.25 0 0 0 12 10.396V5.604a.25.25 0 0 0-.427-.177Z" transform="translate(-4.2 0)"/><path fill="#9198a1" d="M1.75 0h12.5C15.216 0 16 .784 16 1.75v12.5A1.75 1.75 0 0 1 14.25 16H1.75A1.75 1.75 0 0 1 0 14.25V1.75C0 .784.784 0 1.75 0ZM1.5 1.75v12.5c0 .138.112.25.25.25H9.5v-13H1.75a.25.25 0 0 0-.25.25ZM11 14.5h3.25a.25.25 0 0 0 .25-.25V1.75a.25.25 0 0 0-.25-.25H11Z"/></svg>
<div style="position:absolute;white-space:nowrap;top:208px;height:40px;line-height:40px;font-size:20px;color:#f0f6fc;font-weight:700;left:1267px;transform:scaleX(0.865);transform-origin:0 50%;">Files</div>
<div style="position:absolute;left:1217px;top:262px;width:270px;height:40px;background:#212830;border:1px solid #3d444d;border-radius:7px;box-sizing:border-box;"></div>
<svg style="position:absolute;left:1233px;top:273px;" width="20" height="20" viewBox="0 0 16 16"><path fill="#9198a1" d="M9.5 3.25a2.25 2.25 0 1 1 3 2.122V6A2.5 2.5 0 0 1 10 8.5H6a1 1 0 0 0-1 1v1.128a2.251 2.251 0 1 1-1.5 0V5.372a2.25 2.25 0 1 1 1.5 0v1.836A2.493 2.493 0 0 1 6 7h4a1 1 0 0 0 1-1v-.628A2.25 2.25 0 0 1 9.5 3.25Zm-6 0a.75.75 0 1 0 1.5 0 .75.75 0 0 0-1.5 0Zm8.25-.75a.75.75 0 1 0 0 1.5.75.75 0 0 0 0-1.5ZM4.25 12a.75.75 0 1 0 0 1.5.75.75 0 0 0 0-1.5Z" /></svg>
<div style="position:absolute;white-space:nowrap;top:264px;height:40px;line-height:40px;font-size:17px;color:#f0f6fc;font-weight:700;letter-spacing:-0.044px;left:1262.5px;">main</div>
<svg style="position:absolute;left:1451px;top:273px;" width="20" height="20" viewBox="0 0 16 16"><path fill="#9198a1" d="m4.427 7.427 3.396 3.396a.25.25 0 0 0 .354 0l3.396-3.396A.25.25 0 0 0 11.396 7H4.604a.25.25 0 0 0-.177.427Z" /></svg>
<div style="position:absolute;left:1497px;top:262px;width:80px;height:40px;background:#212830;border:1px solid #3d444d;border-radius:7px;box-sizing:border-box;"></div>
<div style="position:absolute;left:1537px;top:263px;width:1px;height:38px;background:#3d444d;"></div>
<svg style="position:absolute;left:1508px;top:272px;" width="20" height="20" viewBox="0 0 16 16"><path fill="#9198a1" d="M7.75 2a.75.75 0 0 1 .75.75V7h4.25a.75.75 0 0 1 0 1.5H8.5v4.25a.75.75 0 0 1-1.5 0V8.5H2.75a.75.75 0 0 1 0-1.5H7V2.75A.75.75 0 0 1 7.75 2Z" /></svg>
<svg style="position:absolute;left:1547px;top:272px;" width="20" height="20" viewBox="0 0 16 16"><path fill="#9198a1" d="M10.68 11.74a6 6 0 0 1-7.922-8.982 6 6 0 0 1 8.982 7.922l3.04 3.04a.749.749 0 0 1-.326 1.275.749.749 0 0 1-.734-.215ZM11.5 7a4.499 4.499 0 1 0-8.997 0A4.499 4.499 0 0 0 11.5 7Z" /></svg>
<div style="position:absolute;left:1217px;top:312px;width:360px;height:40px;background:#0d1117;border:1px solid #3d444d;border-radius:7px;box-sizing:border-box;"></div>
<svg style="position:absolute;left:1228px;top:324px;" width="20" height="20" viewBox="0 0 16 16"><path fill="#9198a1" d="M10.68 11.74a6 6 0 0 1-7.922-8.982 6 6 0 0 1 8.982 7.922l3.04 3.04a.749.749 0 0 1-.326 1.275.749.749 0 0 1-.734-.215ZM11.5 7a4.499 4.499 0 1 0-8.997 0A4.499 4.499 0 0 0 11.5 7Z" /></svg>
<div style="position:absolute;white-space:nowrap;top:315px;height:40px;line-height:40px;font-size:17px;color:#9198a1;left:1258px;"><span style="letter-spacing:-0.20px">Go</span><span style="letter-spacing:0.69px"> to</span><span style="letter-spacing:0.29px"> file</span></div>
<div style="position:absolute;left:1546px;top:321px;width:20px;height:24px;border:1px solid #3d444d;border-radius:5px;box-sizing:border-box;background:#151b23;"></div>
<div style="position:absolute;left:1546px;top:321px;width:20px;height:24px;line-height:26px;text-align:center;font-family:'Liberation Mono',monospace;font-size:14px;color:#f0f6fc;">t</div>
<div style="position:absolute;left:1578px;top:367px;width:19px;height:968px;background:#2c2c2c;"></div>
<svg style="position:absolute;left:1581px;top:372px;" width="13" height="13" viewBox="0 0 13 13"><path d="M6.5 1.3Q7.3 1.3 8 2.3L12.8 9.4Q13.3 10.7 11.8 10.7H1.2Q-0.3 10.7 0.2 9.4L5 2.3Q5.7 1.3 6.5 1.3Z" fill="#9f9f9f"/></svg>
<div style="position:absolute;left:1582px;top:390px;width:11px;height:613px;background:#9f9f9f;border-radius:5.5px;"></div>
<svg style="position:absolute;left:1581px;top:1319px;" width="13" height="13" viewBox="0 0 13 13"><path d="M6.5 11.7Q7.3 11.7 8 10.7L12.8 3.6Q13.3 2.3 11.8 2.3H1.2Q-0.3 2.3 0.2 3.6L5 10.7Q5.7 11.7 6.5 11.7Z" fill="#9f9f9f"/></svg>
<svg style="position:absolute;left:1220px;top:380.25px;" width="15" height="15" viewBox="0 0 12 12"><path fill="#9198a1" d="M4.7 10c-.2 0-.4-.1-.5-.2-.3-.3-.3-.8 0-1.1L6.9 6 4.2 3.3c-.3-.3-.3-.8 0-1.1.3-.3.8-.3 1.1 0l3.3 3.2c.3.3.3.8 0 1.1L5.3 9.7c-.2.2-.4.3-.6.3Z" /></svg>
<svg style="position:absolute;left:1247px;top:376.75px;" width="20" height="20" viewBox="0 0 16 16"><path fill="#9198a1" d="M1.75 1A1.75 1.75 0 0 0 0 2.75v10.5C0 14.216.784 15 1.75 15h12.5A1.75 1.75 0 0 0 16 13.25v-8.5A1.75 1.75 0 0 0 14.25 3H7.5a.25.25 0 0 1-.2-.1l-.9-1.2C6.07 1.26 5.55 1 5 1H1.75Z" /></svg>
<div style="position:absolute;white-space:nowrap;top:369px;height:40px;line-height:40px;font-size:17px;color:#f0f6fc;left:1277px;"><span style="letter-spacing:0.47px">.github</span></div>
<svg style="position:absolute;left:1220px;top:420.25px;" width="15" height="15" viewBox="0 0 12 12"><path fill="#9198a1" d="M4.7 10c-.2 0-.4-.1-.5-.2-.3-.3-.3-.8 0-1.1L6.9 6 4.2 3.3c-.3-.3-.3-.8 0-1.1.3-.3.8-.3 1.1 0l3.3 3.2c.3.3.3.8 0 1.1L5.3 9.7c-.2.2-.4.3-.6.3Z" /></svg>
<svg style="position:absolute;left:1247px;top:416.75px;" width="20" height="20" viewBox="0 0 16 16"><path fill="#9198a1" d="M1.75 1A1.75 1.75 0 0 0 0 2.75v10.5C0 14.216.784 15 1.75 15h12.5A1.75 1.75 0 0 0 16 13.25v-8.5A1.75 1.75 0 0 0 14.25 3H7.5a.25.25 0 0 1-.2-.1l-.9-1.2C6.07 1.26 5.55 1 5 1H1.75Z" /></svg>
<div style="position:absolute;white-space:nowrap;top:409px;height:40px;line-height:40px;font-size:17px;color:#f0f6fc;left:1277px;"><span style="letter-spacing:0.13px">circuits</span></div>
<svg style="position:absolute;left:1220px;top:461.25px;" width="15" height="15" viewBox="0 0 12 12"><path fill="#9198a1" d="M4.7 10c-.2 0-.4-.1-.5-.2-.3-.3-.3-.8 0-1.1L6.9 6 4.2 3.3c-.3-.3-.3-.8 0-1.1.3-.3.8-.3 1.1 0l3.3 3.2c.3.3.3.8 0 1.1L5.3 9.7c-.2.2-.4.3-.6.3Z" /></svg>
<svg style="position:absolute;left:1247px;top:457.75px;" width="20" height="20" viewBox="0 0 16 16"><path fill="#9198a1" d="M1.75 1A1.75 1.75 0 0 0 0 2.75v10.5C0 14.216.784 15 1.75 15h12.5A1.75 1.75 0 0 0 16 13.25v-8.5A1.75 1.75 0 0 0 14.25 3H7.5a.25.25 0 0 1-.2-.1l-.9-1.2C6.07 1.26 5.55 1 5 1H1.75Z" /></svg>
<div style="position:absolute;white-space:nowrap;top:450px;height:40px;line-height:40px;font-size:17px;color:#f0f6fc;left:1277px;"><span style="letter-spacing:-0.12px">crates</span></div>
<svg style="position:absolute;left:1220px;top:501.25px;" width="15" height="15" viewBox="0 0 12 12"><path fill="#9198a1" d="M4.7 10c-.2 0-.4-.1-.5-.2-.3-.3-.3-.8 0-1.1L6.9 6 4.2 3.3c-.3-.3-.3-.8 0-1.1.3-.3.8-.3 1.1 0l3.3 3.2c.3.3.3.8 0 1.1L5.3 9.7c-.2.2-.4.3-.6.3Z" /></svg>
<svg style="position:absolute;left:1247px;top:497.75px;" width="20" height="20" viewBox="0 0 16 16"><path fill="#9198a1" d="M1.75 1A1.75 1.75 0 0 0 0 2.75v10.5C0 14.216.784 15 1.75 15h12.5A1.75 1.75 0 0 0 16 13.25v-8.5A1.75 1.75 0 0 0 14.25 3H7.5a.25.25 0 0 1-.2-.1l-.9-1.2C6.07 1.26 5.55 1 5 1H1.75Z" /></svg>
<div style="position:absolute;white-space:nowrap;top:490px;height:40px;line-height:40px;font-size:17px;color:#f0f6fc;left:1277px;"><span style="letter-spacing:0.04px">docs</span></div>
<div style="position:absolute;left:1217px;top:528px;width:341px;height:40px;background:#1e242b;border-radius:7px;"></div>
<div style="position:absolute;left:1207px;top:533px;width:5px;height:30px;background:#4493f8;border-radius:2.5px;"></div>
<svg style="position:absolute;left:1220px;top:541px;" width="15" height="15" viewBox="0 0 12 12"><path fill="#9198a1" d="M6 8.825c-.2 0-.4-.1-.5-.2l-3.3-3.3c-.3-.3-.3-.8 0-1.1.3-.3.8-.3 1.1 0l2.7 2.7 2.7-2.7c.3-.3.8-.3 1.1 0 .3.3.3.8 0 1.1l-3.2 3.2c-.2.2-.4.3-.6.3Z" /></svg>
<svg style="position:absolute;left:1247px;top:537.75px;" width="20" height="20" viewBox="0 0 16 16"><path fill="#9198a1" d="M.513 1.513A1.75 1.75 0 0 1 1.75 1h3.5c.55 0 1.07.26 1.4.7l.9 1.2a.25.25 0 0 0 .2.1H13a1 1 0 0 1 1 1v.5H2.75a.75.75 0 0 0 0 1.5h11.978a1 1 0 0 1 .994 1.117L15 13.25A1.75 1.75 0 0 1 13.25 15H1.75A1.75 1.75 0 0 1 0 13.25V2.75c0-.464.184-.91.513-1.237Z" /></svg>
<div style="position:absolute;white-space:nowrap;top:530px;height:40px;line-height:40px;font-size:17px;color:#f0f6fc;left:1277px;"><span style="letter-spacing:-0.06px">examples</span></div>
<svg style="position:absolute;left:1230px;top:581.25px;" width="15" height="15" viewBox="0 0 12 12"><path fill="#9198a1" d="M4.7 10c-.2 0-.4-.1-.5-.2-.3-.3-.3-.8 0-1.1L6.9 6 4.2 3.3c-.3-.3-.3-.8 0-1.1.3-.3.8-.3 1.1 0l3.3 3.2c.3.3.3.8 0 1.1L5.3 9.7c-.2.2-.4.3-.6.3Z" /></svg>
<svg style="position:absolute;left:1257px;top:577.75px;" width="20" height="20" viewBox="0 0 16 16"><path fill="#9198a1" d="M1.75 1A1.75 1.75 0 0 0 0 2.75v10.5C0 14.216.784 15 1.75 15h12.5A1.75 1.75 0 0 0 16 13.25v-8.5A1.75 1.75 0 0 0 14.25 3H7.5a.25.25 0 0 1-.2-.1l-.9-1.2C6.07 1.26 5.55 1 5 1H1.75Z" /></svg>
<div style="position:absolute;white-space:nowrap;top:570px;height:40px;line-height:40px;font-size:17px;color:#f0f6fc;left:1287px;"><span style="letter-spacing:0.38px">arithmetic</span><span style="letter-spacing:-0.51px">_assert</span></div>
<svg style="position:absolute;left:1230px;top:622.25px;" width="15" height="15" viewBox="0 0 12 12"><path fill="#9198a1" d="M4.7 10c-.2 0-.4-.1-.5-.2-.3-.3-.3-.8 0-1.1L6.9 6 4.2 3.3c-.3-.3-.3-.8 0-1.1.3-.3.8-.3 1.1 0l3.3 3.2c.3.3.3.8 0 1.1L5.3 9.7c-.2.2-.4.3-.6.3Z" /></svg>
<svg style="position:absolute;left:1257px;top:618.75px;" width="20" height="20" viewBox="0 0 16 16"><path fill="#9198a1" d="M1.75 1A1.75 1.75 0 0 0 0 2.75v10.5C0 14.216.784 15 1.75 15h12.5A1.75 1.75 0 0 0 16 13.25v-8.5A1.75 1.75 0 0 0 14.25 3H7.5a.25.25 0 0 1-.2-.1l-.9-1.2C6.07 1.26 5.55 1 5 1H1.75Z" /></svg>
<div style="position:absolute;white-space:nowrap;top:611px;height:40px;line-height:40px;font-size:17px;color:#f0f6fc;left:1287px;"><span style="letter-spacing:-0.07px">array</span><span style="letter-spacing:-0.06px">_struct</span><span style="letter-spacing:0.19px">_lookup</span></div>
<svg style="position:absolute;left:1230px;top:662.25px;" width="15" height="15" viewBox="0 0 12 12"><path fill="#9198a1" d="M4.7 10c-.2 0-.4-.1-.5-.2-.3-.3-.3-.8 0-1.1L6.9 6 4.2 3.3c-.3-.3-.3-.8 0-1.1.3-.3.8-.3 1.1 0l3.3 3.2c.3.3.3.8 0 1.1L5.3 9.7c-.2.2-.4.3-.6.3Z" /></svg>
<svg style="position:absolute;left:1257px;top:658.75px;" width="20" height="20" viewBox="0 0 16 16"><path fill="#9198a1" d="M1.75 1A1.75 1.75 0 0 0 0 2.75v10.5C0 14.216.784 15 1.75 15h12.5A1.75 1.75 0 0 0 16 13.25v-8.5A1.75 1.75 0 0 0 14.25 3H7.5a.25.25 0 0 1-.2-.1l-.9-1.2C6.07 1.26 5.55 1 5 1H1.75Z" /></svg>
<div style="position:absolute;white-space:nowrap;top:651px;height:40px;line-height:40px;font-size:17px;color:#f0f6fc;left:1287px;"><span style="letter-spacing:0.28px">bitwise</span><span style="letter-spacing:-0.59px">_u8</span></div>
<svg style="position:absolute;left:1230px;top:702.25px;" width="15" height="15" viewBox="0 0 12 12"><path fill="#9198a1" d="M4.7 10c-.2 0-.4-.1-.5-.2-.3-.3-.3-.8 0-1.1L6.9 6 4.2 3.3c-.3-.3-.3-.8 0-1.1.3-.3.8-.3 1.1 0l3.3 3.2c.3.3.3.8 0 1.1L5.3 9.7c-.2.2-.4.3-.6.3Z" /></svg>
<svg style="position:absolute;left:1257px;top:698.75px;" width="20" height="20" viewBox="0 0 16 16"><path fill="#9198a1" d="M1.75 1A1.75 1.75 0 0 0 0 2.75v10.5C0 14.216.784 15 1.75 15h12.5A1.75 1.75 0 0 0 16 13.25v-8.5A1.75 1.75 0 0 0 14.25 3H7.5a.25.25 0 0 1-.2-.1l-.9-1.2C6.07 1.26 5.55 1 5 1H1.75Z" /></svg>
<div style="position:absolute;white-space:nowrap;top:691px;height:40px;line-height:40px;font-size:17px;color:#f0f6fc;left:1287px;"><span style="letter-spacing:-0.07px">blake2s</span><span style="letter-spacing:-0.03px">_digest</span></div>
<svg style="position:absolute;left:1230px;top:742.25px;" width="15" height="15" viewBox="0 0 12 12"><path fill="#9198a1" d="M4.7 10c-.2 0-.4-.1-.5-.2-.3-.3-.3-.8 0-1.1L6.9 6 4.2 3.3c-.3-.3-.3-.8 0-1.1.3-.3.8-.3 1.1 0l3.3 3.2c.3.3.3.8 0 1.1L5.3 9.7c-.2.2-.4.3-.6.3Z" /></svg>
<svg style="position:absolute;left:1257px;top:738.75px;" width="20" height="20" viewBox="0 0 16 16"><path fill="#9198a1" d="M1.75 1A1.75 1.75 0 0 0 0 2.75v10.5C0 14.216.784 15 1.75 15h12.5A1.75 1.75 0 0 0 16 13.25v-8.5A1.75 1.75 0 0 0 14.25 3H7.5a.25.25 0 0 1-.2-.1l-.9-1.2C6.07 1.26 5.55 1 5 1H1.75Z" /></svg>
<div style="position:absolute;white-space:nowrap;top:731px;height:40px;line-height:40px;font-size:17px;color:#f0f6fc;left:1287px;"><span style="letter-spacing:0.35px">boolean</span><span style="letter-spacing:-0.01px">_logic</span></div>
<svg style="position:absolute;left:1230px;top:783.25px;" width="15" height="15" viewBox="0 0 12 12"><path fill="#9198a1" d="M4.7 10c-.2 0-.4-.1-.5-.2-.3-.3-.3-.8 0-1.1L6.9 6 4.2 3.3c-.3-.3-.3-.8 0-1.1.3-.3.8-.3 1.1 0l3.3 3.2c.3.3.3.8 0 1.1L5.3 9.7c-.2.2-.4.3-.6.3Z" /></svg>
<svg style="position:absolute;left:1257px;top:779.75px;" width="20" height="20" viewBox="0 0 16 16"><path fill="#9198a1" d="M1.75 1A1.75 1.75 0 0 0 0 2.75v10.5C0 14.216.784 15 1.75 15h12.5A1.75 1.75 0 0 0 16 13.25v-8.5A1.75 1.75 0 0 0 14.25 3H7.5a.25.25 0 0 1-.2-.1l-.9-1.2C6.07 1.26 5.55 1 5 1H1.75Z" /></svg>
<div style="position:absolute;white-space:nowrap;top:772px;height:40px;line-height:40px;font-size:17px;color:#f0f6fc;left:1287px;"><span style="letter-spacing:0.55px">bounded</span><span style="letter-spacing:0.14px">_loop</span><span style="letter-spacing:0.01px">_partial</span><span style="letter-spacing:-0.49px">_sum</span></div>
<svg style="position:absolute;left:1230px;top:823.25px;" width="15" height="15" viewBox="0 0 12 12"><path fill="#9198a1" d="M4.7 10c-.2 0-.4-.1-.5-.2-.3-.3-.3-.8 0-1.1L6.9 6 4.2 3.3c-.3-.3-.3-.8 0-1.1.3-.3.8-.3 1.1 0l3.3 3.2c.3.3.3.8 0 1.1L5.3 9.7c-.2.2-.4.3-.6.3Z" /></svg>
<svg style="position:absolute;left:1257px;top:819.75px;" width="20" height="20" viewBox="0 0 16 16"><path fill="#9198a1" d="M1.75 1A1.75 1.75 0 0 0 0 2.75v10.5C0 14.216.784 15 1.75 15h12.5A1.75 1.75 0 0 0 16 13.25v-8.5A1.75 1.75 0 0 0 14.25 3H7.5a.25.25 0 0 1-.2-.1l-.9-1.2C6.07 1.26 5.55 1 5 1H1.75Z" /></svg>
<div style="position:absolute;white-space:nowrap;top:812px;height:40px;line-height:40px;font-size:17px;color:#f0f6fc;left:1287px;"><span style="letter-spacing:0.55px">demo</span></div>
<svg style="position:absolute;left:1230px;top:863.25px;" width="15" height="15" viewBox="0 0 12 12"><path fill="#9198a1" d="M4.7 10c-.2 0-.4-.1-.5-.2-.3-.3-.3-.8 0-1.1L6.9 6 4.2 3.3c-.3-.3-.3-.8 0-1.1.3-.3.8-.3 1.1 0l3.3 3.2c.3.3.3.8 0 1.1L5.3 9.7c-.2.2-.4.3-.6.3Z" /></svg>
<svg style="position:absolute;left:1257px;top:859.75px;" width="20" height="20" viewBox="0 0 16 16"><path fill="#9198a1" d="M1.75 1A1.75 1.75 0 0 0 0 2.75v10.5C0 14.216.784 15 1.75 15h12.5A1.75 1.75 0 0 0 16 13.25v-8.5A1.75 1.75 0 0 0 14.25 3H7.5a.25.25 0 0 1-.2-.1l-.9-1.2C6.07 1.26 5.55 1 5 1H1.75Z" /></svg>
<div style="position:absolute;white-space:nowrap;top:852px;height:40px;line-height:40px;font-size:17px;color:#f0f6fc;left:1287px;"><span style="letter-spacing:0.22px">dynamic</span><span style="letter-spacing:-0.21px">_index</span><span style="letter-spacing:0.19px">_lookup</span></div>
<svg style="position:absolute;left:1230px;top:903.25px;" width="15" height="15" viewBox="0 0 12 12"><path fill="#9198a1" d="M4.7 10c-.2 0-.4-.1-.5-.2-.3-.3-.3-.8 0-1.1L6.9 6 4.2 3.3c-.3-.3-.3-.8 0-1.1.3-.3.8-.3 1.1 0l3.3 3.2c.3.3.3.8 0 1.1L5.3 9.7c-.2.2-.4.3-.6.3Z" /></svg>
<svg style="position:absolute;left:1257px;top:899.75px;" width="20" height="20" viewBox="0 0 16 16"><path fill="#9198a1" d="M1.75 1A1.75 1.75 0 0 0 0 2.75v10.5C0 14.216.784 15 1.75 15h12.5A1.75 1.75 0 0 0 16 13.25v-8.5A1.75 1.75 0 0 0 14.25 3H7.5a.25.25 0 0 1-.2-.1l-.9-1.2C6.07 1.26 5.55 1 5 1H1.75Z" /></svg>
<div style="position:absolute;white-space:nowrap;top:892px;height:40px;line-height:40px;font-size:17px;color:#f0f6fc;left:1287px;"><span style="letter-spacing:0.26px">fixed</span><span style="letter-spacing:0.14px">_loop</span><span style="letter-spacing:-0.49px">_sum</span></div>
<svg style="position:absolute;left:1230px;top:944.25px;" width="15" height="15" viewBox="0 0 12 12"><path fill="#9198a1" d="M4.7 10c-.2 0-.4-.1-.5-.2-.3-.3-.3-.8 0-1.1L6.9 6 4.2 3.3c-.3-.3-.3-.8 0-1.1.3-.3.8-.3 1.1 0l3.3 3.2c.3.3.3.8 0 1.1L5.3 9.7c-.2.2-.4.3-.6.3Z" /></svg>
<svg style="position:absolute;left:1257px;top:940.75px;" width="20" height="20" viewBox="0 0 16 16"><path fill="#9198a1" d="M1.75 1A1.75 1.75 0 0 0 0 2.75v10.5C0 14.216.784 15 1.75 15h12.5A1.75 1.75 0 0 0 16 13.25v-8.5A1.75 1.75 0 0 0 14.25 3H7.5a.25.25 0 0 1-.2-.1l-.9-1.2C6.07 1.26 5.55 1 5 1H1.75Z" /></svg>
<div style="position:absolute;white-space:nowrap;top:933px;height:40px;line-height:40px;font-size:17px;color:#f0f6fc;left:1287px;"><span style="letter-spacing:0.53px">full</span><span style="letter-spacing:-0.18px">_features</span></div>
<svg style="position:absolute;left:1230px;top:984.25px;" width="15" height="15" viewBox="0 0 12 12"><path fill="#9198a1" d="M4.7 10c-.2 0-.4-.1-.5-.2-.3-.3-.3-.8 0-1.1L6.9 6 4.2 3.3c-.3-.3-.3-.8 0-1.1.3-.3.8-.3 1.1 0l3.3 3.2c.3.3.3.8 0 1.1L5.3 9.7c-.2.2-.4.3-.6.3Z" /></svg>
<svg style="position:absolute;left:1257px;top:980.75px;" width="20" height="20" viewBox="0 0 16 16"><path fill="#9198a1" d="M1.75 1A1.75 1.75 0 0 0 0 2.75v10.5C0 14.216.784 15 1.75 15h12.5A1.75 1.75 0 0 0 16 13.25v-8.5A1.75 1.75 0 0 0 14.25 3H7.5a.25.25 0 0 1-.2-.1l-.9-1.2C6.07 1.26 5.55 1 5 1H1.75Z" /></svg>
<div style="position:absolute;white-space:nowrap;top:973px;height:40px;line-height:40px;font-size:17px;color:#f0f6fc;left:1287px;"><span style="letter-spacing:0.33px">inequality</span><span style="letter-spacing:-0.45px">_check</span></div>
<svg style="position:absolute;left:1230px;top:1024.25px;" width="15" height="15" viewBox="0 0 12 12"><path fill="#9198a1" d="M4.7 10c-.2 0-.4-.1-.5-.2-.3-.3-.3-.8 0-1.1L6.9 6 4.2 3.3c-.3-.3-.3-.8 0-1.1.3-.3.8-.3 1.1 0l3.3 3.2c.3.3.3.8 0 1.1L5.3 9.7c-.2.2-.4.3-.6.3Z" /></svg>
<svg style="position:absolute;left:1257px;top:1020.75px;" width="20" height="20" viewBox="0 0 16 16"><path fill="#9198a1" d="M1.75 1A1.75 1.75 0 0 0 0 2.75v10.5C0 14.216.784 15 1.75 15h12.5A1.75 1.75 0 0 0 16 13.25v-8.5A1.75 1.75 0 0 0 14.25 3H7.5a.25.25 0 0 1-.2-.1l-.9-1.2C6.07 1.26 5.55 1 5 1H1.75Z" /></svg>
<div style="position:absolute;white-space:nowrap;top:1013px;height:40px;line-height:40px;font-size:17px;color:#f0f6fc;left:1287px;"><span style="letter-spacing:0.69px">multi</span><span style="letter-spacing:0.21px">_function</span><span style="letter-spacing:-0.31px">_chain</span></div>
<svg style="position:absolute;left:1230px;top:1064.25px;" width="15" height="15" viewBox="0 0 12 12"><path fill="#9198a1" d="M4.7 10c-.2 0-.4-.1-.5-.2-.3-.3-.3-.8 0-1.1L6.9 6 4.2 3.3c-.3-.3-.3-.8 0-1.1.3-.3.8-.3 1.1 0l3.3 3.2c.3.3.3.8 0 1.1L5.3 9.7c-.2.2-.4.3-.6.3Z" /></svg>
<svg style="position:absolute;left:1257px;top:1060.75px;" width="20" height="20" viewBox="0 0 16 16"><path fill="#9198a1" d="M1.75 1A1.75 1.75 0 0 0 0 2.75v10.5C0 14.216.784 15 1.75 15h12.5A1.75 1.75 0 0 0 16 13.25v-8.5A1.75 1.75 0 0 0 14.25 3H7.5a.25.25 0 0 1-.2-.1l-.9-1.2C6.07 1.26 5.55 1 5 1H1.75Z" /></svg>
<div style="position:absolute;white-space:nowrap;top:1053px;height:40px;line-height:40px;font-size:17px;color:#f0f6fc;left:1287px;"><span style="letter-spacing:0.13px">nested</span><span style="letter-spacing:-0.03px">_matrix</span><span style="letter-spacing:-0.21px">_index</span></div>
<svg style="position:absolute;left:1230px;top:1105.25px;" width="15" height="15" viewBox="0 0 12 12"><path fill="#9198a1" d="M4.7 10c-.2 0-.4-.1-.5-.2-.3-.3-.3-.8 0-1.1L6.9 6 4.2 3.3c-.3-.3-.3-.8 0-1.1.3-.3.8-.3 1.1 0l3.3 3.2c.3.3.3.8 0 1.1L5.3 9.7c-.2.2-.4.3-.6.3Z" /></svg>
<svg style="position:absolute;left:1257px;top:1101.75px;" width="20" height="20" viewBox="0 0 16 16"><path fill="#9198a1" d="M1.75 1A1.75 1.75 0 0 0 0 2.75v10.5C0 14.216.784 15 1.75 15h12.5A1.75 1.75 0 0 0 16 13.25v-8.5A1.75 1.75 0 0 0 14.25 3H7.5a.25.25 0 0 1-.2-.1l-.9-1.2C6.07 1.26 5.55 1 5 1H1.75Z" /></svg>
<div style="position:absolute;white-space:nowrap;top:1094px;height:40px;line-height:40px;font-size:17px;color:#f0f6fc;left:1287px;"><span style="letter-spacing:0.07px">pedersen</span><span style="letter-spacing:-0.59px">_hash</span></div>
<svg style="position:absolute;left:1230px;top:1145.25px;" width="15" height="15" viewBox="0 0 12 12"><path fill="#9198a1" d="M4.7 10c-.2 0-.4-.1-.5-.2-.3-.3-.3-.8 0-1.1L6.9 6 4.2 3.3c-.3-.3-.3-.8 0-1.1.3-.3.8-.3 1.1 0l3.3 3.2c.3.3.3.8 0 1.1L5.3 9.7c-.2.2-.4.3-.6.3Z" /></svg>
<svg style="position:absolute;left:1257px;top:1141.75px;" width="20" height="20" viewBox="0 0 16 16"><path fill="#9198a1" d="M1.75 1A1.75 1.75 0 0 0 0 2.75v10.5C0 14.216.784 15 1.75 15h12.5A1.75 1.75 0 0 0 16 13.25v-8.5A1.75 1.75 0 0 0 14.25 3H7.5a.25.25 0 0 1-.2-.1l-.9-1.2C6.07 1.26 5.55 1 5 1H1.75Z" /></svg>
<div style="position:absolute;white-space:nowrap;top:1134px;height:40px;line-height:40px;font-size:17px;color:#f0f6fc;left:1287px;"><span style="letter-spacing:0.31px">poseidon2</span><span style="letter-spacing:-0.28px">_state</span><span style="letter-spacing:0.04px">_word</span></div>
<svg style="position:absolute;left:1230px;top:1185.25px;" width="15" height="15" viewBox="0 0 12 12"><path fill="#9198a1" d="M4.7 10c-.2 0-.4-.1-.5-.2-.3-.3-.3-.8 0-1.1L6.9 6 4.2 3.3c-.3-.3-.3-.8 0-1.1.3-.3.8-.3 1.1 0l3.3 3.2c.3.3.3.8 0 1.1L5.3 9.7c-.2.2-.4.3-.6.3Z" /></svg>
<svg style="position:absolute;left:1257px;top:1181.75px;" width="20" height="20" viewBox="0 0 16 16"><path fill="#9198a1" d="M1.75 1A1.75 1.75 0 0 0 0 2.75v10.5C0 14.216.784 15 1.75 15h12.5A1.75 1.75 0 0 0 16 13.25v-8.5A1.75 1.75 0 0 0 14.25 3H7.5a.25.25 0 0 1-.2-.1l-.9-1.2C6.07 1.26 5.55 1 5 1H1.75Z" /></svg>
<div style="position:absolute;white-space:nowrap;top:1174px;height:40px;line-height:40px;font-size:17px;color:#f0f6fc;left:1287px;"><span style="letter-spacing:0.17px">range</span><span style="letter-spacing:-0.45px">_u32</span></div>
<svg style="position:absolute;left:1230px;top:1225.25px;" width="15" height="15" viewBox="0 0 12 12"><path fill="#9198a1" d="M4.7 10c-.2 0-.4-.1-.5-.2-.3-.3-.3-.8 0-1.1L6.9 6 4.2 3.3c-.3-.3-.3-.8 0-1.1.3-.3.8-.3 1.1 0l3.3 3.2c.3.3.3.8 0 1.1L5.3 9.7c-.2.2-.4.3-.6.3Z" /></svg>
<svg style="position:absolute;left:1257px;top:1221.75px;" width="20" height="20" viewBox="0 0 16 16"><path fill="#9198a1" d="M1.75 1A1.75 1.75 0 0 0 0 2.75v10.5C0 14.216.784 15 1.75 15h12.5A1.75 1.75 0 0 0 16 13.25v-8.5A1.75 1.75 0 0 0 14.25 3H7.5a.25.25 0 0 1-.2-.1l-.9-1.2C6.07 1.26 5.55 1 5 1H1.75Z" /></svg>
<div style="position:absolute;white-space:nowrap;top:1214px;height:40px;line-height:40px;font-size:17px;color:#f0f6fc;left:1287px;"><span style="letter-spacing:0.36px">shift</span><span style="letter-spacing:-0.37px">_and</span><span style="letter-spacing:-0.55px">_mask</span></div>
<svg style="position:absolute;left:1230px;top:1266.25px;" width="15" height="15" viewBox="0 0 12 12"><path fill="#9198a1" d="M4.7 10c-.2 0-.4-.1-.5-.2-.3-.3-.3-.8 0-1.1L6.9 6 4.2 3.3c-.3-.3-.3-.8 0-1.1.3-.3.8-.3 1.1 0l3.3 3.2c.3.3.3.8 0 1.1L5.3 9.7c-.2.2-.4.3-.6.3Z" /></svg>
<svg style="position:absolute;left:1257px;top:1262.75px;" width="20" height="20" viewBox="0 0 16 16"><path fill="#9198a1" d="M1.75 1A1.75 1.75 0 0 0 0 2.75v10.5C0 14.216.784 15 1.75 15h12.5A1.75 1.75 0 0 0 16 13.25v-8.5A1.75 1.75 0 0 0 14.25 3H7.5a.25.25 0 0 1-.2-.1l-.9-1.2C6.07 1.26 5.55 1 5 1H1.75Z" /></svg>
<div style="position:absolute;white-space:nowrap;top:1255px;height:40px;line-height:40px;font-size:17px;color:#f0f6fc;left:1287px;"><span style="letter-spacing:0.38px">string</span><span style="letter-spacing:-0.55px">_ascii</span><span style="letter-spacing:-0.49px">_sum</span></div>
<svg style="position:absolute;left:1230px;top:1306.25px;" width="15" height="15" viewBox="0 0 12 12"><path fill="#9198a1" d="M4.7 10c-.2 0-.4-.1-.5-.2-.3-.3-.3-.8 0-1.1L6.9 6 4.2 3.3c-.3-.3-.3-.8 0-1.1.3-.3.8-.3 1.1 0l3.3 3.2c.3.3.3.8 0 1.1L5.3 9.7c-.2.2-.4.3-.6.3Z" /></svg>
<svg style="position:absolute;left:1257px;top:1302.75px;" width="20" height="20" viewBox="0 0 16 16"><path fill="#9198a1" d="M1.75 1A1.75 1.75 0 0 0 0 2.75v10.5C0 14.216.784 15 1.75 15h12.5A1.75 1.75 0 0 0 16 13.25v-8.5A1.75 1.75 0 0 0 14.25 3H7.5a.25.25 0 0 1-.2-.1l-.9-1.2C6.07 1.26 5.55 1 5 1H1.75Z" /></svg>
<div style="position:absolute;white-space:nowrap;top:1295px;height:40px;line-height:40px;font-size:17px;color:#f0f6fc;left:1287px;"><span style="letter-spacing:0.30px">struct</span><span style="letter-spacing:-0.10px">_transfer</span></div>
<div style="position:absolute;left:1613px;top:187px;width:905px;height:1148px;border-left:1px solid #3d444d;border-right:1px solid #3d444d;box-sizing:border-box;"></div>
<div style="position:absolute;left:1614px;top:187px;width:903px;height:55px;background:#151b23;"></div>
<div style="position:absolute;left:1614px;top:242px;width:903px;height:1px;background:#3d444d;"></div>
<div style="position:absolute;left:1614px;top:251px;width:903px;height:1px;background:#3d444d;"></div>
<div style="position:absolute;white-space:nowrap;top:195px;height:40px;line-height:40px;font-size:17px;color:#4493f8;letter-spacing:0.437px;left:1634px;-webkit-text-stroke:0.5px currentColor;">Noir-Groth16</div>
<div style="position:absolute;white-space:nowrap;top:195px;height:40px;line-height:40px;font-size:17px;color:#9198a1;left:1748.5px;">/</div>
<div style="position:absolute;white-space:nowrap;top:195px;height:40px;line-height:40px;font-size:17px;color:#f0f6fc;font-weight:700;letter-spacing:-0.312px;left:1764px;">examples</div>
<div style="position:absolute;white-space:nowrap;top:195px;height:40px;line-height:40px;font-size:17px;color:#9198a1;left:1850.5px;">/</div>
<svg style="position:absolute;left:2447px;top:205px;" width="18" height="18" viewBox="0 0 16 16"><path fill="#9198a1" d="M3.47 7.78a.75.75 0 0 1 0-1.06l4.25-4.25a.75.75 0 0 1 1.06 0l4.25 4.25a.751.751 0 0 1-.018 1.042.751.751 0 0 1-1.042.018L9 4.81v7.44a.75.75 0 0 1-1.5 0V4.81L4.53 7.78a.75.75 0 0 1-1.06 0Z" /></svg>
<div style="position:absolute;white-space:nowrap;top:195px;height:40px;line-height:40px;font-size:14.5px;color:#f0f6fc;font-weight:700;letter-spacing:-0.332px;left:2471.5px;">Top</div>
<svg style="position:absolute;left:1634px;top:267px;" width="20" height="20" viewBox="0 0 16 16"><path fill="#9198a1" d="M1.75 1A1.75 1.75 0 0 0 0 2.75v10.5C0 14.216.784 15 1.75 15h12.5A1.75 1.75 0 0 0 16 13.25v-8.5A1.75 1.75 0 0 0 14.25 3H7.5a.25.25 0 0 1-.2-.1l-.9-1.2C6.07 1.26 5.55 1 5 1H1.75Z" /></svg>
<div style="position:absolute;white-space:nowrap;top:259px;height:40px;line-height:40px;font-size:17px;color:#f0f6fc;left:1667px;"><span style="letter-spacing:0.38px">arithmetic</span><span style="letter-spacing:-0.51px">_assert</span></div>
<div style="position:absolute;white-space:nowrap;top:259px;height:40px;line-height:40px;font-size:17px;color:#9198a1;left:1996px;"><span style="letter-spacing:0.26px">test</span><span style="letter-spacing:0.10px"> against</span><span style="letter-spacing:0.08px"> example</span><span style="letter-spacing:0.13px"> circuits</span></div>
<div style="position:absolute;white-space:nowrap;top:259px;height:40px;line-height:40px;font-size:17px;color:#9198a1;right:52.50px;"><span style="letter-spacing:-0.02px;margin:0 0.01px 0 -0.01px">2</span><span style="letter-spacing:-0.16px"> days</span><span style="letter-spacing:0.29px"> ago</span></div>
<div style="position:absolute;left:1614px;top:302px;width:903px;height:1px;background:#3d444d;"></div>
<svg style="position:absolute;left:1634px;top:318px;" width="20" height="20" viewBox="0 0 16 16"><path fill="#9198a1" d="M1.75 1A1.75 1.75 0 0 0 0 2.75v10.5C0 14.216.784 15 1.75 15h12.5A1.75 1.75 0 0 0 16 13.25v-8.5A1.75 1.75 0 0 0 14.25 3H7.5a.25.25 0 0 1-.2-.1l-.9-1.2C6.07 1.26 5.55 1 5 1H1.75Z" /></svg>
<div style="position:absolute;white-space:nowrap;top:310px;height:40px;line-height:40px;font-size:17px;color:#f0f6fc;left:1667px;"><span style="letter-spacing:-0.07px">array</span><span style="letter-spacing:-0.06px">_struct</span><span style="letter-spacing:0.19px">_lookup</span></div>
<div style="position:absolute;white-space:nowrap;top:310px;height:40px;line-height:40px;font-size:17px;color:#9198a1;left:1996px;"><span style="letter-spacing:0.13px">expand</span><span style="letter-spacing:-0.05px"> examples</span><span style="letter-spacing:0.30px">/ tests</span></div>
<div style="position:absolute;white-space:nowrap;top:310px;height:40px;line-height:40px;font-size:17px;color:#9198a1;right:52.50px;"><span style="letter-spacing:-0.02px;margin:0 0.01px 0 -0.01px">2</span><span style="letter-spacing:-0.16px"> days</span><span style="letter-spacing:0.29px"> ago</span></div>
<div style="position:absolute;left:1614px;top:353px;width:903px;height:1px;background:#3d444d;"></div>
<svg style="position:absolute;left:1634px;top:369px;" width="20" height="20" viewBox="0 0 16 16"><path fill="#9198a1" d="M1.75 1A1.75 1.75 0 0 0 0 2.75v10.5C0 14.216.784 15 1.75 15h12.5A1.75 1.75 0 0 0 16 13.25v-8.5A1.75 1.75 0 0 0 14.25 3H7.5a.25.25 0 0 1-.2-.1l-.9-1.2C6.07 1.26 5.55 1 5 1H1.75Z" /></svg>
<div style="position:absolute;white-space:nowrap;top:361px;height:40px;line-height:40px;font-size:17px;color:#f0f6fc;left:1667px;"><span style="letter-spacing:0.28px">bitwise</span><span style="letter-spacing:-0.59px">_u8</span></div>
<div style="position:absolute;white-space:nowrap;top:361px;height:40px;line-height:40px;font-size:17px;color:#9198a1;left:1996px;"><span style="letter-spacing:0.26px">test</span><span style="letter-spacing:0.10px"> against</span><span style="letter-spacing:0.08px"> example</span><span style="letter-spacing:0.13px"> circuits</span></div>
<div style="position:absolute;white-space:nowrap;top:361px;height:40px;line-height:40px;font-size:17px;color:#9198a1;right:52.50px;"><span style="letter-spacing:-0.02px;margin:0 0.01px 0 -0.01px">2</span><span style="letter-spacing:-0.16px"> days</span><span style="letter-spacing:0.29px"> ago</span></div>
<div style="position:absolute;left:1614px;top:404px;width:903px;height:1px;background:#3d444d;"></div>
<svg style="position:absolute;left:1634px;top:420px;" width="20" height="20" viewBox="0 0 16 16"><path fill="#9198a1" d="M1.75 1A1.75 1.75 0 0 0 0 2.75v10.5C0 14.216.784 15 1.75 15h12.5A1.75 1.75 0 0 0 16 13.25v-8.5A1.75 1.75 0 0 0 14.25 3H7.5a.25.25 0 0 1-.2-.1l-.9-1.2C6.07 1.26 5.55 1 5 1H1.75Z" /></svg>
<div style="position:absolute;white-space:nowrap;top:412px;height:40px;line-height:40px;font-size:17px;color:#f0f6fc;left:1667px;"><span style="letter-spacing:-0.07px">blake2s</span><span style="letter-spacing:-0.03px">_digest</span></div>
<div style="position:absolute;white-space:nowrap;top:412px;height:40px;line-height:40px;font-size:17px;color:#9198a1;left:1996px;"><span style="letter-spacing:0.13px">expand</span><span style="letter-spacing:-0.05px"> examples</span><span style="letter-spacing:0.30px">/ tests</span></div>
<div style="position:absolute;white-space:nowrap;top:412px;height:40px;line-height:40px;font-size:17px;color:#9198a1;right:52.50px;"><span style="letter-spacing:-0.02px;margin:0 0.01px 0 -0.01px">2</span><span style="letter-spacing:-0.16px"> days</span><span style="letter-spacing:0.29px"> ago</span></div>
<div style="position:absolute;left:1614px;top:455px;width:903px;height:1px;background:#3d444d;"></div>
<svg style="position:absolute;left:1634px;top:471px;" width="20" height="20" viewBox="0 0 16 16"><path fill="#9198a1" d="M1.75 1A1.75 1.75 0 0 0 0 2.75v10.5C0 14.216.784 15 1.75 15h12.5A1.75 1.75 0 0 0 16 13.25v-8.5A1.75 1.75 0 0 0 14.25 3H7.5a.25.25 0 0 1-.2-.1l-.9-1.2C6.07 1.26 5.55 1 5 1H1.75Z" /></svg>
<div style="position:absolute;white-space:nowrap;top:463px;height:40px;line-height:40px;font-size:17px;color:#f0f6fc;left:1667px;"><span style="letter-spacing:0.35px">boolean</span><span style="letter-spacing:-0.01px">_logic</span></div>
<div style="position:absolute;white-space:nowrap;top:463px;height:40px;line-height:40px;font-size:17px;color:#9198a1;left:1996px;"><span style="letter-spacing:0.26px">test</span><span style="letter-spacing:0.10px"> against</span><span style="letter-spacing:0.08px"> example</span><span style="letter-spacing:0.13px"> circuits</span></div>
<div style="position:absolute;white-space:nowrap;top:463px;height:40px;line-height:40px;font-size:17px;color:#9198a1;right:52.50px;"><span style="letter-spacing:-0.02px;margin:0 0.01px 0 -0.01px">2</span><span style="letter-spacing:-0.16px"> days</span><span style="letter-spacing:0.29px"> ago</span></div>
<div style="position:absolute;left:1614px;top:506px;width:903px;height:1px;background:#3d444d;"></div>
<svg style="position:absolute;left:1634px;top:522px;" width="20" height="20" viewBox="0 0 16 16"><path fill="#9198a1" d="M1.75 1A1.75 1.75 0 0 0 0 2.75v10.5C0 14.216.784 15 1.75 15h12.5A1.75 1.75 0 0 0 16 13.25v-8.5A1.75 1.75 0 0 0 14.25 3H7.5a.25.25 0 0 1-.2-.1l-.9-1.2C6.07 1.26 5.55 1 5 1H1.75Z" /></svg>
<div style="position:absolute;white-space:nowrap;top:514px;height:40px;line-height:40px;font-size:17px;color:#f0f6fc;left:1667px;"><span style="letter-spacing:0.55px">bounded</span><span style="letter-spacing:0.14px">_loop</span><span style="letter-spacing:0.01px">_partial</span><span style="letter-spacing:-0.49px">_sum</span></div>
<div style="position:absolute;white-space:nowrap;top:514px;height:40px;line-height:40px;font-size:17px;color:#9198a1;left:1996px;"><span style="letter-spacing:0.26px">test</span><span style="letter-spacing:0.10px"> against</span><span style="letter-spacing:0.08px"> example</span><span style="letter-spacing:0.13px"> circuits</span></div>
<div style="position:absolute;white-space:nowrap;top:514px;height:40px;line-height:40px;font-size:17px;color:#9198a1;right:52.50px;"><span style="letter-spacing:-0.02px;margin:0 0.01px 0 -0.01px">2</span><span style="letter-spacing:-0.16px"> days</span><span style="letter-spacing:0.29px"> ago</span></div>
<div style="position:absolute;left:1614px;top:557px;width:903px;height:1px;background:#3d444d;"></div>
<svg style="position:absolute;left:1634px;top:573px;" width="20" height="20" viewBox="0 0 16 16"><path fill="#9198a1" d="M1.75 1A1.75 1.75 0 0 0 0 2.75v10.5C0 14.216.784 15 1.75 15h12.5A1.75 1.75 0 0 0 16 13.25v-8.5A1.75 1.75 0 0 0 14.25 3H7.5a.25.25 0 0 1-.2-.1l-.9-1.2C6.07 1.26 5.55 1 5 1H1.75Z" /></svg>
<div style="position:absolute;white-space:nowrap;top:565px;height:40px;line-height:40px;font-size:17px;color:#f0f6fc;left:1667px;"><span style="letter-spacing:0.55px">demo</span></div>
<div style="position:absolute;white-space:nowrap;top:565px;height:40px;line-height:40px;font-size:17px;color:#9198a1;left:1996px;"><span style="letter-spacing:0.48px">Move</span><span style="letter-spacing:-0.25px"> src</span><span style="letter-spacing:0.84px">/ into</span><span style="letter-spacing:-0.05px"> examples</span><span style="letter-spacing:0.86px">/demo</span></div>
<div style="position:absolute;white-space:nowrap;top:565px;height:40px;line-height:40px;font-size:17px;color:#9198a1;right:52.50px;"><span style="letter-spacing:-0.02px;margin:0 0.01px 0 -0.01px">2</span><span style="letter-spacing:-0.16px"> days</span><span style="letter-spacing:0.29px"> ago</span></div>
<div style="position:absolute;left:1614px;top:608px;width:903px;height:1px;background:#3d444d;"></div>
<svg style="position:absolute;left:1634px;top:624px;" width="20" height="20" viewBox="0 0 16 16"><path fill="#9198a1" d="M1.75 1A1.75 1.75 0 0 0 0 2.75v10.5C0 14.216.784 15 1.75 15h12.5A1.75 1.75 0 0 0 16 13.25v-8.5A1.75 1.75 0 0 0 14.25 3H7.5a.25.25 0 0 1-.2-.1l-.9-1.2C6.07 1.26 5.55 1 5 1H1.75Z" /></svg>
<div style="position:absolute;white-space:nowrap;top:616px;height:40px;line-height:40px;font-size:17px;color:#f0f6fc;left:1667px;"><span style="letter-spacing:0.22px">dynamic</span><span style="letter-spacing:-0.21px">_index</span><span style="letter-spacing:0.19px">_lookup</span></div>
<div style="position:absolute;white-space:nowrap;top:616px;height:40px;line-height:40px;font-size:17px;color:#9198a1;left:1996px;"><span style="letter-spacing:0.26px">test</span><span style="letter-spacing:0.10px"> against</span><span style="letter-spacing:0.08px"> example</span><span style="letter-spacing:0.13px"> circuits</span></div>
<div style="position:absolute;white-space:nowrap;top:616px;height:40px;line-height:40px;font-size:17px;color:#9198a1;right:52.50px;"><span style="letter-spacing:-0.02px;margin:0 0.01px 0 -0.01px">2</span><span style="letter-spacing:-0.16px"> days</span><span style="letter-spacing:0.29px"> ago</span></div>
<div style="position:absolute;left:1614px;top:659px;width:903px;height:1px;background:#3d444d;"></div>
<svg style="position:absolute;left:1634px;top:675px;" width="20" height="20" viewBox="0 0 16 16"><path fill="#9198a1" d="M1.75 1A1.75 1.75 0 0 0 0 2.75v10.5C0 14.216.784 15 1.75 15h12.5A1.75 1.75 0 0 0 16 13.25v-8.5A1.75 1.75 0 0 0 14.25 3H7.5a.25.25 0 0 1-.2-.1l-.9-1.2C6.07 1.26 5.55 1 5 1H1.75Z" /></svg>
<div style="position:absolute;white-space:nowrap;top:667px;height:40px;line-height:40px;font-size:17px;color:#f0f6fc;left:1667px;"><span style="letter-spacing:0.26px">fixed</span><span style="letter-spacing:0.14px">_loop</span><span style="letter-spacing:-0.49px">_sum</span></div>
<div style="position:absolute;white-space:nowrap;top:667px;height:40px;line-height:40px;font-size:17px;color:#9198a1;left:1996px;"><span style="letter-spacing:0.26px">test</span><span style="letter-spacing:0.10px"> against</span><span style="letter-spacing:0.08px"> example</span><span style="letter-spacing:0.13px"> circuits</span></div>
<div style="position:absolute;white-space:nowrap;top:667px;height:40px;line-height:40px;font-size:17px;color:#9198a1;right:52.50px;"><span style="letter-spacing:-0.02px;margin:0 0.01px 0 -0.01px">2</span><span style="letter-spacing:-0.16px"> days</span><span style="letter-spacing:0.29px"> ago</span></div>
<div style="position:absolute;left:1614px;top:710px;width:903px;height:1px;background:#3d444d;"></div>
<svg style="position:absolute;left:1634px;top:726px;" width="20" height="20" viewBox="0 0 16 16"><path fill="#9198a1" d="M1.75 1A1.75 1.75 0 0 0 0 2.75v10.5C0 14.216.784 15 1.75 15h12.5A1.75 1.75 0 0 0 16 13.25v-8.5A1.75 1.75 0 0 0 14.25 3H7.5a.25.25 0 0 1-.2-.1l-.9-1.2C6.07 1.26 5.55 1 5 1H1.75Z" /></svg>
<div style="position:absolute;white-space:nowrap;top:718px;height:40px;line-height:40px;font-size:17px;color:#f0f6fc;left:1667px;"><span style="letter-spacing:0.53px">full</span><span style="letter-spacing:-0.18px">_features</span></div>
<div style="position:absolute;white-space:nowrap;top:718px;height:40px;line-height:40px;font-size:17px;color:#9198a1;left:1996px;"><span style="letter-spacing:0.39px">compile</span><span style="letter-spacing:0.44px"> full</span><span style="letter-spacing:-0.18px">_features</span></div>
<div style="position:absolute;white-space:nowrap;top:718px;height:40px;line-height:40px;font-size:17px;color:#9198a1;right:52.50px;"><span style="letter-spacing:-0.02px;margin:0 0.01px 0 -0.01px">3</span><span style="letter-spacing:0.18px"> hours</span><span style="letter-spacing:0.29px"> ago</span></div>
<div style="position:absolute;left:1614px;top:761px;width:903px;height:1px;background:#3d444d;"></div>
<svg style="position:absolute;left:1634px;top:777px;" width="20" height="20" viewBox="0 0 16 16"><path fill="#9198a1" d="M1.75 1A1.75 1.75 0 0 0 0 2.75v10.5C0 14.216.784 15 1.75 15h12.5A1.75 1.75 0 0 0 16 13.25v-8.5A1.75 1.75 0 0 0 14.25 3H7.5a.25.25 0 0 1-.2-.1l-.9-1.2C6.07 1.26 5.55 1 5 1H1.75Z" /></svg>
<div style="position:absolute;white-space:nowrap;top:769px;height:40px;line-height:40px;font-size:17px;color:#f0f6fc;left:1667px;"><span style="letter-spacing:0.33px">inequality</span><span style="letter-spacing:-0.45px">_check</span></div>
<div style="position:absolute;white-space:nowrap;top:769px;height:40px;line-height:40px;font-size:17px;color:#9198a1;left:1996px;"><span style="letter-spacing:0.26px">test</span><span style="letter-spacing:0.10px"> against</span><span style="letter-spacing:0.08px"> example</span><span style="letter-spacing:0.13px"> circuits</span></div>
<div style="position:absolute;white-space:nowrap;top:769px;height:40px;line-height:40px;font-size:17px;color:#9198a1;right:52.50px;"><span style="letter-spacing:-0.02px;margin:0 0.01px 0 -0.01px">2</span><span style="letter-spacing:-0.16px"> days</span><span style="letter-spacing:0.29px"> ago</span></div>
<div style="position:absolute;left:1614px;top:812px;width:903px;height:1px;background:#3d444d;"></div>
<svg style="position:absolute;left:1634px;top:828px;" width="20" height="20" viewBox="0 0 16 16"><path fill="#9198a1" d="M1.75 1A1.75 1.75 0 0 0 0 2.75v10.5C0 14.216.784 15 1.75 15h12.5A1.75 1.75 0 0 0 16 13.25v-8.5A1.75 1.75 0 0 0 14.25 3H7.5a.25.25 0 0 1-.2-.1l-.9-1.2C6.07 1.26 5.55 1 5 1H1.75Z" /></svg>
<div style="position:absolute;white-space:nowrap;top:820px;height:40px;line-height:40px;font-size:17px;color:#f0f6fc;left:1667px;"><span style="letter-spacing:0.69px">multi</span><span style="letter-spacing:0.21px">_function</span><span style="letter-spacing:-0.31px">_chain</span></div>
<div style="position:absolute;white-space:nowrap;top:820px;height:40px;line-height:40px;font-size:17px;color:#9198a1;left:1996px;"><span style="letter-spacing:0.26px">test</span><span style="letter-spacing:0.10px"> against</span><span style="letter-spacing:0.08px"> example</span><span style="letter-spacing:0.13px"> circuits</span></div>
<div style="position:absolute;white-space:nowrap;top:820px;height:40px;line-height:40px;font-size:17px;color:#9198a1;right:52.50px;"><span style="letter-spacing:-0.02px;margin:0 0.01px 0 -0.01px">2</span><span style="letter-spacing:-0.16px"> days</span><span style="letter-spacing:0.29px"> ago</span></div>
<div style="position:absolute;left:1614px;top:863px;width:903px;height:1px;background:#3d444d;"></div>
<svg style="position:absolute;left:1634px;top:879px;" width="20" height="20" viewBox="0 0 16 16"><path fill="#9198a1" d="M1.75 1A1.75 1.75 0 0 0 0 2.75v10.5C0 14.216.784 15 1.75 15h12.5A1.75 1.75 0 0 0 16 13.25v-8.5A1.75 1.75 0 0 0 14.25 3H7.5a.25.25 0 0 1-.2-.1l-.9-1.2C6.07 1.26 5.55 1 5 1H1.75Z" /></svg>
<div style="position:absolute;white-space:nowrap;top:871px;height:40px;line-height:40px;font-size:17px;color:#f0f6fc;left:1667px;"><span style="letter-spacing:0.13px">nested</span><span style="letter-spacing:-0.03px">_matrix</span><span style="letter-spacing:-0.21px">_index</span></div>
<div style="position:absolute;white-space:nowrap;top:871px;height:40px;line-height:40px;font-size:17px;color:#9198a1;left:1996px;"><span style="letter-spacing:0.13px">expand</span><span style="letter-spacing:-0.05px"> examples</span><span style="letter-spacing:0.30px">/ tests</span></div>
<div style="position:absolute;white-space:nowrap;top:871px;height:40px;line-height:40px;font-size:17px;color:#9198a1;right:52.50px;"><span style="letter-spacing:-0.02px;margin:0 0.01px 0 -0.01px">2</span><span style="letter-spacing:-0.16px"> days</span><span style="letter-spacing:0.29px"> ago</span></div>
<div style="position:absolute;left:1614px;top:914px;width:903px;height:1px;background:#3d444d;"></div>
<svg style="position:absolute;left:1634px;top:930px;" width="20" height="20" viewBox="0 0 16 16"><path fill="#9198a1" d="M1.75 1A1.75 1.75 0 0 0 0 2.75v10.5C0 14.216.784 15 1.75 15h12.5A1.75 1.75 0 0 0 16 13.25v-8.5A1.75 1.75 0 0 0 14.25 3H7.5a.25.25 0 0 1-.2-.1l-.9-1.2C6.07 1.26 5.55 1 5 1H1.75Z" /></svg>
<div style="position:absolute;white-space:nowrap;top:922px;height:40px;line-height:40px;font-size:17px;color:#f0f6fc;left:1667px;"><span style="letter-spacing:0.07px">pedersen</span><span style="letter-spacing:-0.59px">_hash</span></div>
<div style="position:absolute;white-space:nowrap;top:922px;height:40px;line-height:40px;font-size:17px;color:#9198a1;left:1996px;"><span style="letter-spacing:0.13px">expand</span><span style="letter-spacing:-0.05px"> examples</span><span style="letter-spacing:0.30px">/ tests</span></div>
<div style="position:absolute;white-space:nowrap;top:922px;height:40px;line-height:40px;font-size:17px;color:#9198a1;right:52.50px;"><span style="letter-spacing:-0.02px;margin:0 0.01px 0 -0.01px">2</span><span style="letter-spacing:-0.16px"> days</span><span style="letter-spacing:0.29px"> ago</span></div>
<div style="position:absolute;left:1614px;top:965px;width:903px;height:1px;background:#3d444d;"></div>
<svg style="position:absolute;left:1634px;top:981px;" width="20" height="20" viewBox="0 0 16 16"><path fill="#9198a1" d="M1.75 1A1.75 1.75 0 0 0 0 2.75v10.5C0 14.216.784 15 1.75 15h12.5A1.75 1.75 0 0 0 16 13.25v-8.5A1.75 1.75 0 0 0 14.25 3H7.5a.25.25 0 0 1-.2-.1l-.9-1.2C6.07 1.26 5.55 1 5 1H1.75Z" /></svg>
<div style="position:absolute;white-space:nowrap;top:973px;height:40px;line-height:40px;font-size:17px;color:#f0f6fc;left:1667px;"><span style="letter-spacing:0.31px">poseidon2</span><span style="letter-spacing:-0.28px">_state</span><span style="letter-spacing:0.04px">_word</span></div>
<div style="position:absolute;white-space:nowrap;top:973px;height:40px;line-height:40px;font-size:17px;color:#9198a1;left:1996px;"><span style="letter-spacing:0.13px">expand</span><span style="letter-spacing:-0.05px"> examples</span><span style="letter-spacing:0.30px">/ tests</span></div>
<div style="position:absolute;white-space:nowrap;top:973px;height:40px;line-height:40px;font-size:17px;color:#9198a1;right:52.50px;"><span style="letter-spacing:-0.02px;margin:0 0.01px 0 -0.01px">2</span><span style="letter-spacing:-0.16px"> days</span><span style="letter-spacing:0.29px"> ago</span></div>
<div style="position:absolute;left:1614px;top:1016px;width:903px;height:1px;background:#3d444d;"></div>
<svg style="position:absolute;left:1634px;top:1032px;" width="20" height="20" viewBox="0 0 16 16"><path fill="#9198a1" d="M1.75 1A1.75 1.75 0 0 0 0 2.75v10.5C0 14.216.784 15 1.75 15h12.5A1.75 1.75 0 0 0 16 13.25v-8.5A1.75 1.75 0 0 0 14.25 3H7.5a.25.25 0 0 1-.2-.1l-.9-1.2C6.07 1.26 5.55 1 5 1H1.75Z" /></svg>
<div style="position:absolute;white-space:nowrap;top:1024px;height:40px;line-height:40px;font-size:17px;color:#f0f6fc;left:1667px;"><span style="letter-spacing:0.17px">range</span><span style="letter-spacing:-0.45px">_u32</span></div>
<div style="position:absolute;white-space:nowrap;top:1024px;height:40px;line-height:40px;font-size:17px;color:#9198a1;left:1996px;"><span style="letter-spacing:0.26px">test</span><span style="letter-spacing:0.10px"> against</span><span style="letter-spacing:0.08px"> example</span><span style="letter-spacing:0.13px"> circuits</span></div>
<div style="position:absolute;white-space:nowrap;top:1024px;height:40px;line-height:40px;font-size:17px;color:#9198a1;right:52.50px;"><span style="letter-spacing:-0.02px;margin:0 0.01px 0 -0.01px">2</span><span style="letter-spacing:-0.16px"> days</span><span style="letter-spacing:0.29px"> ago</span></div>
<div style="position:absolute;left:1614px;top:1067px;width:903px;height:1px;background:#3d444d;"></div>
<svg style="position:absolute;left:1634px;top:1083px;" width="20" height="20" viewBox="0 0 16 16"><path fill="#9198a1" d="M1.75 1A1.75 1.75 0 0 0 0 2.75v10.5C0 14.216.784 15 1.75 15h12.5A1.75 1.75 0 0 0 16 13.25v-8.5A1.75 1.75 0 0 0 14.25 3H7.5a.25.25 0 0 1-.2-.1l-.9-1.2C6.07 1.26 5.55 1 5 1H1.75Z" /></svg>
<div style="position:absolute;white-space:nowrap;top:1075px;height:40px;line-height:40px;font-size:17px;color:#f0f6fc;left:1667px;"><span style="letter-spacing:0.36px">shift</span><span style="letter-spacing:-0.37px">_and</span><span style="letter-spacing:-0.55px">_mask</span></div>
<div style="position:absolute;white-space:nowrap;top:1075px;height:40px;line-height:40px;font-size:17px;color:#9198a1;left:1996px;"><span style="letter-spacing:0.13px">expand</span><span style="letter-spacing:-0.05px"> examples</span><span style="letter-spacing:0.30px">/ tests</span></div>
<div style="position:absolute;white-space:nowrap;top:1075px;height:40px;line-height:40px;font-size:17px;color:#9198a1;right:52.50px;"><span style="letter-spacing:-0.02px;margin:0 0.01px 0 -0.01px">2</span><span style="letter-spacing:-0.16px"> days</span><span style="letter-spacing:0.29px"> ago</span></div>
<div style="position:absolute;left:1614px;top:1118px;width:903px;height:1px;background:#3d444d;"></div>
<svg style="position:absolute;left:1634px;top:1134px;" width="20" height="20" viewBox="0 0 16 16"><path fill="#9198a1" d="M1.75 1A1.75 1.75 0 0 0 0 2.75v10.5C0 14.216.784 15 1.75 15h12.5A1.75 1.75 0 0 0 16 13.25v-8.5A1.75 1.75 0 0 0 14.25 3H7.5a.25.25 0 0 1-.2-.1l-.9-1.2C6.07 1.26 5.55 1 5 1H1.75Z" /></svg>
<div style="position:absolute;white-space:nowrap;top:1126px;height:40px;line-height:40px;font-size:17px;color:#f0f6fc;left:1667px;"><span style="letter-spacing:0.38px">string</span><span style="letter-spacing:-0.55px">_ascii</span><span style="letter-spacing:-0.49px">_sum</span></div>
<div style="position:absolute;white-space:nowrap;top:1126px;height:40px;line-height:40px;font-size:17px;color:#9198a1;left:1996px;"><span style="letter-spacing:0.26px">test</span><span style="letter-spacing:0.10px"> against</span><span style="letter-spacing:0.08px"> example</span><span style="letter-spacing:0.13px"> circuits</span></div>
<div style="position:absolute;white-space:nowrap;top:1126px;height:40px;line-height:40px;font-size:17px;color:#9198a1;right:52.50px;"><span style="letter-spacing:-0.02px;margin:0 0.01px 0 -0.01px">2</span><span style="letter-spacing:-0.16px"> days</span><span style="letter-spacing:0.29px"> ago</span></div>
<div style="position:absolute;left:1614px;top:1169px;width:903px;height:1px;background:#3d444d;"></div>
<svg style="position:absolute;left:1634px;top:1185px;" width="20" height="20" viewBox="0 0 16 16"><path fill="#9198a1" d="M1.75 1A1.75 1.75 0 0 0 0 2.75v10.5C0 14.216.784 15 1.75 15h12.5A1.75 1.75 0 0 0 16 13.25v-8.5A1.75 1.75 0 0 0 14.25 3H7.5a.25.25 0 0 1-.2-.1l-.9-1.2C6.07 1.26 5.55 1 5 1H1.75Z" /></svg>
<div style="position:absolute;white-space:nowrap;top:1177px;height:40px;line-height:40px;font-size:17px;color:#f0f6fc;left:1667px;"><span style="letter-spacing:0.30px">struct</span><span style="letter-spacing:-0.10px">_transfer</span></div>
<div style="position:absolute;white-space:nowrap;top:1177px;height:40px;line-height:40px;font-size:17px;color:#9198a1;left:1996px;"><span style="letter-spacing:0.26px">test</span><span style="letter-spacing:0.10px"> against</span><span style="letter-spacing:0.08px"> example</span><span style="letter-spacing:0.13px"> circuits</span></div>
<div style="position:absolute;white-space:nowrap;top:1177px;height:40px;line-height:40px;font-size:17px;color:#9198a1;right:52.50px;"><span style="letter-spacing:-0.02px;margin:0 0.01px 0 -0.01px">2</span><span style="letter-spacing:-0.16px"> days</span><span style="letter-spacing:0.29px"> ago</span></div>
<div style="position:absolute;left:1614px;top:1220px;width:903px;height:1px;background:#3d444d;"></div>
<svg style="position:absolute;left:1634px;top:1236px;" width="20" height="20" viewBox="0 0 16 16"><path fill="#9198a1" d="M1.75 1A1.75 1.75 0 0 0 0 2.75v10.5C0 14.216.784 15 1.75 15h12.5A1.75 1.75 0 0 0 16 13.25v-8.5A1.75 1.75 0 0 0 14.25 3H7.5a.25.25 0 0 1-.2-.1l-.9-1.2C6.07 1.26 5.55 1 5 1H1.75Z" /></svg>
<div style="position:absolute;white-space:nowrap;top:1228px;height:40px;line-height:40px;font-size:17px;color:#f0f6fc;left:1667px;"><span style="letter-spacing:0.53px">tuple</span><span style="letter-spacing:-0.14px">_flag</span></div>
<div style="position:absolute;white-space:nowrap;top:1228px;height:40px;line-height:40px;font-size:17px;color:#9198a1;left:1996px;"><span style="letter-spacing:0.26px">test</span><span style="letter-spacing:0.10px"> against</span><span style="letter-spacing:0.08px"> example</span><span style="letter-spacing:0.13px"> circuits</span></div>
<div style="position:absolute;white-space:nowrap;top:1228px;height:40px;line-height:40px;font-size:17px;color:#9198a1;right:52.50px;"><span style="letter-spacing:-0.02px;margin:0 0.01px 0 -0.01px">2</span><span style="letter-spacing:-0.16px"> days</span><span style="letter-spacing:0.29px"> ago</span></div>
<div style="position:absolute;left:1614px;top:1271px;width:903px;height:1px;background:#3d444d;"></div>
<svg style="position:absolute;left:1634px;top:1287px;" width="20" height="20" viewBox="0 0 16 16"><path fill="#9198a1" d="M1.75 1A1.75 1.75 0 0 0 0 2.75v10.5C0 14.216.784 15 1.75 15h12.5A1.75 1.75 0 0 0 16 13.25v-8.5A1.75 1.75 0 0 0 14.25 3H7.5a.25.25 0 0 1-.2-.1l-.9-1.2C6.07 1.26 5.55 1 5 1H1.75Z" /></svg>
<div style="position:absolute;white-space:nowrap;top:1279px;height:40px;line-height:40px;font-size:17px;color:#f0f6fc;left:1667px;"><span style="letter-spacing:0.53px">tuple</span><span style="letter-spacing:0.01px">_inputs</span><span style="letter-spacing:-0.05px">_complex</span></div>
<div style="position:absolute;white-space:nowrap;top:1279px;height:40px;line-height:40px;font-size:17px;color:#9198a1;left:1996px;"><span style="letter-spacing:0.13px">expand</span><span style="letter-spacing:-0.05px"> examples</span><span style="letter-spacing:0.30px">/ tests</span></div>
<div style="position:absolute;white-space:nowrap;top:1279px;height:40px;line-height:40px;font-size:17px;color:#9198a1;right:52.50px;"><span style="letter-spacing:-0.02px;margin:0 0.01px 0 -0.01px">2</span><span style="letter-spacing:-0.16px"> days</span><span style="letter-spacing:0.29px"> ago</span></div>
<div style="position:absolute;left:1614px;top:1322px;width:903px;height:1px;background:#3d444d;"></div>
<div style="position:absolute;left:2533px;top:187px;width:17px;height:1148px;background:#2c2c2c;"></div>
<svg style="position:absolute;left:2535.6px;top:192px;" width="13" height="13" viewBox="0 0 13 13"><path d="M6.5 1.3Q7.3 1.3 8 2.3L12.8 9.4Q13.3 10.7 11.8 10.7H1.2Q-0.3 10.7 0.2 9.4L5 2.3Q5.7 1.3 6.5 1.3Z" fill="#9f9f9f"/></svg>
<div style="position:absolute;left:2537px;top:329px;width:11px;height:367px;background:#9f9f9f;border-radius:5.5px;"></div>
<svg style="position:absolute;left:2535.6px;top:1319.4px;" width="13" height="13" viewBox="0 0 13 13"><path d="M6.5 11.7Q7.3 11.7 8 10.7L12.8 3.6Q13.3 2.3 11.8 2.3H1.2Q-0.3 2.3 0.2 3.6L5 10.7Q5.7 11.7 6.5 11.7Z" fill="#9f9f9f"/></svg></div>
</div></div>
</body></html>
